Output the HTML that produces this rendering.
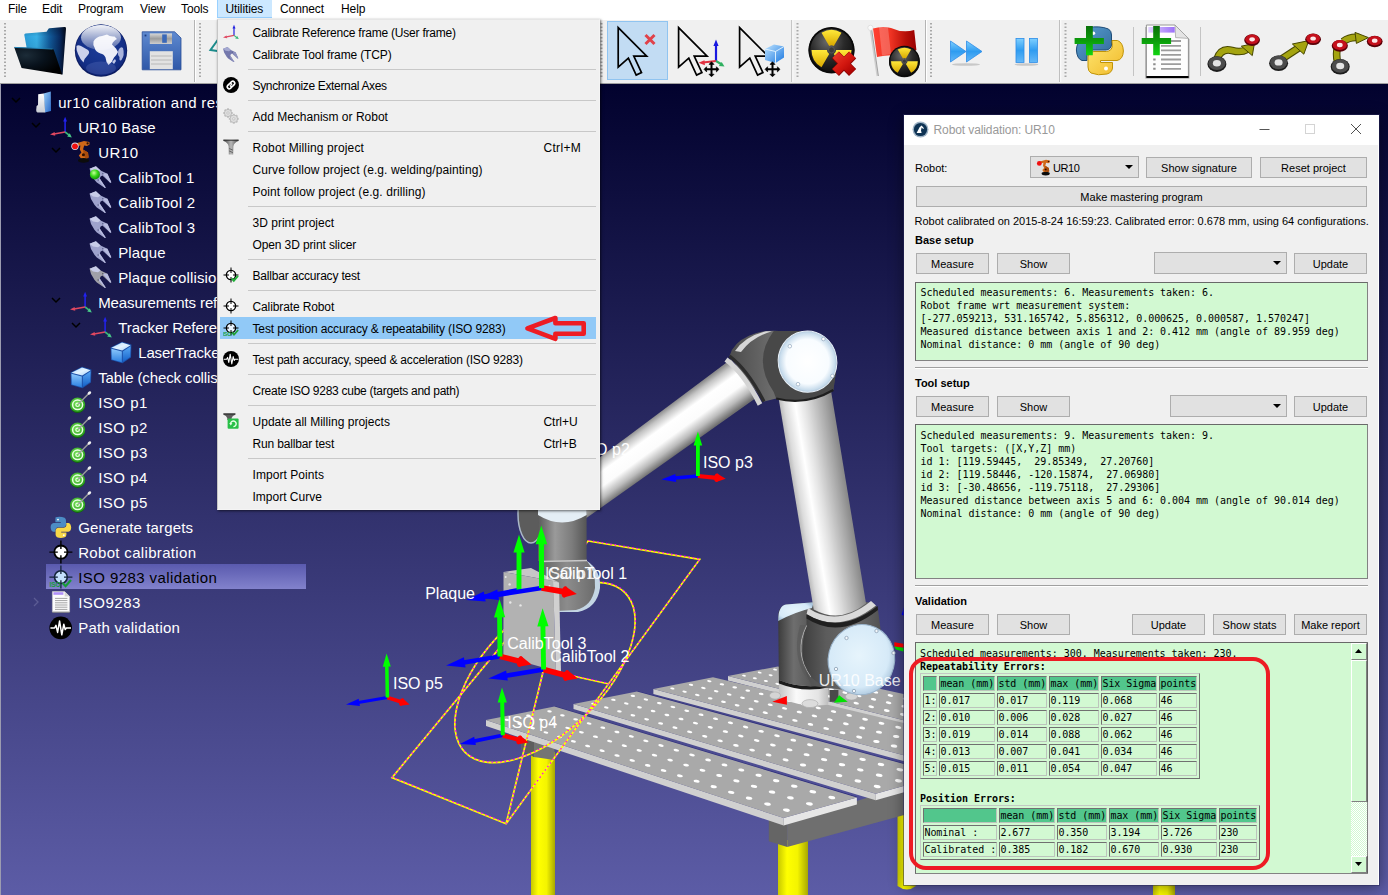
<!DOCTYPE html>
<html><head><meta charset="utf-8"><title>RoboDK</title>
<style>
*{box-sizing:border-box;margin:0;padding:0}
html,body{width:1388px;height:895px;overflow:hidden;background:#fff;font-family:"Liberation Sans",sans-serif}
#menubar{position:absolute;left:0;top:0;width:1388px;height:19px;background:#fff;font-size:12px;color:#000;letter-spacing:-.1px}
#menubar span{position:absolute;top:0;height:18px;line-height:19px;white-space:nowrap}
#menubar .hl{background:#cce8ff;border:1px solid #99d1ff;border-top:0;border-right:0;line-height:19px}
#toolbar{position:absolute;left:0;top:19px;width:1388px;height:65px;background:#f0f0f0;border-bottom:1px solid #a0a0a0}
#view{position:absolute;left:0;top:84px;width:1388px;height:811px;background:linear-gradient(#02022e,#5c5ca6);overflow:hidden}
#tree{position:absolute;left:0;top:0;width:320px;height:811px;color:#fff;font-size:15px}
#tree .r{position:absolute;height:25px;line-height:25px;white-space:nowrap;letter-spacing:.25px}
#tree .ic{position:absolute;width:24px;height:25px}
#tree .ar{position:absolute}
#tree .selrow{position:absolute;background:linear-gradient(#5a5aae,#8282cc)}
#menu{position:absolute;left:217px;top:19px;width:383px;height:491px;background:#f0f0f0;border:1px solid #f4f4f4;border-left-color:#c6c6c6;border-top-color:#e6e6e6;box-shadow:1px 1px 2.5px rgba(0,0,0,.6);font-size:12px;color:#000}
#menu .i{position:absolute;left:2px;width:376px;height:22px;line-height:25px;padding-left:32.5px;white-space:nowrap}
#menu .i b{position:absolute;left:323.5px;font-weight:normal}
#menu .i svg{position:absolute;left:3px;top:2.5px}
#menu .s{position:absolute;left:30px;width:348px;height:1px;background:#c8c8c8}
#menu .sel{background:#91c9f7}
#dlg{position:absolute;left:904px;top:115px;width:475px;height:770px;background:#f0f0f0;font-size:11px;color:#000;box-shadow:0 0 0 1px rgba(40,40,90,.5),0 2px 14px rgba(0,0,0,.45);border-right:1px solid #fff}
#tb{position:absolute;left:0;top:0;width:475px;height:30px;background:#fff}
#tt{position:absolute;left:29.5px;top:0;line-height:31px;font-size:12px;color:#999;letter-spacing:-.1px}
#dlg .l{position:absolute;height:16px;line-height:16px;white-space:nowrap}
#dlg .b{position:absolute;background:#e1e1e1;border:1px solid #adadad;text-align:center;white-space:nowrap}
#dlg .cb{position:absolute;background:#e1e1e1;border:1px solid #adadad;white-space:nowrap}
#dlg .cb i{position:absolute;right:5.5px;top:50%;margin-top:-2px;border:4px solid transparent;border-top:4.5px solid #000;border-bottom:0;width:0;height:0}
#dlg .cb .ri{position:absolute;left:4.5px;top:2px}
#dlg .g{position:absolute;background:#d2f9d2;border:1px solid #828282;border-top-color:#696969;border-left-color:#696969;font-family:"DejaVu Sans Mono","Liberation Mono",monospace;font-size:10px;line-height:13px;padding-left:4.5px;white-space:pre;letter-spacing:-.03px}
#dlg .m{position:absolute;font-family:"DejaVu Sans Mono","Liberation Mono",monospace;font-size:10px;line-height:13px;white-space:pre;letter-spacing:-.03px}
#dlg .hr{position:absolute;left:11px;width:453px;height:2px;border-top:1px solid #a0a0a0;border-bottom:1px solid #fff}
#dlg .t{position:absolute;border-collapse:separate;border-spacing:2px;border:1px solid;border-color:#c4c8c4 #707070 #707070 #c4c8c4;font-family:"DejaVu Sans Mono","Liberation Mono",monospace;font-size:10px;letter-spacing:-.03px}
#dlg .t td{border:1px solid;border-color:#707070 #bcc4bc #bcc4bc #707070;height:15px;line-height:12px;padding:0;white-space:pre;overflow:hidden}
#dlg .t td.h{background:#52c68c}
#sb{position:absolute;background:repeating-conic-gradient(#fff 0% 25%,#d2f9d2 0% 50%) 0 0/2px 2px}
#sb .sa{position:absolute;left:0;width:16px;height:17px;background:#d2f9d2;border:1px solid #fff;border-right-color:#808080;border-bottom-color:#808080;box-shadow:1px 0 0 #606060}
#sb .sa svg{position:absolute;left:0;top:-1px}
#rr{position:absolute;border:4.5px solid #ed1c24;border-radius:17px}

#lb{position:absolute;left:0;top:0;width:1.4px;height:811px;background:#9c9cb0}

</style></head><body>
<div id="menubar">
<span style="left:8px">File</span><span style="left:42px">Edit</span><span style="left:78px">Program</span><span style="left:140px">View</span><span style="left:181px">Tools</span><span class="hl" style="left:217px;width:55px;padding-left:7.5px">Utilities</span><span style="left:280px">Connect</span><span style="left:341px">Help</span>
</div>
<div id="toolbar">
<svg width="1388" height="65" viewBox="0 19 1388 65" style="position:absolute;left:0;top:0">
<defs>
<linearGradient id="tbFolB" x1="0" y1="0" x2="1" y2="0"><stop offset="0" stop-color="#2a9cd8"/><stop offset=".3" stop-color="#38b0e6"/><stop offset=".6" stop-color="#125c9c"/><stop offset=".85" stop-color="#082a60"/><stop offset="1" stop-color="#010818"/></linearGradient>
<linearGradient id="tbFolB2" x1="0" y1="0" x2="0" y2="1"><stop offset="0" stop-color="#000" stop-opacity=".25"/><stop offset=".2" stop-color="#000" stop-opacity="0"/><stop offset="1" stop-color="#000" stop-opacity=".2"/></linearGradient>
<radialGradient id="tbFolF" cx=".25" cy=".3" r=".8"><stop offset="0" stop-color="#1c2c38"/><stop offset=".5" stop-color="#08121c"/><stop offset="1" stop-color="#000"/></radialGradient>
<radialGradient id="tbGlobe" cx=".5" cy=".45" r=".6"><stop offset="0" stop-color="#1c3c98"/><stop offset=".7" stop-color="#143088"/><stop offset="1" stop-color="#102474"/></radialGradient>
<linearGradient id="tbGloss" x1="0" y1="0" x2="0" y2="1"><stop offset="0" stop-color="#fff" stop-opacity=".95"/><stop offset="1" stop-color="#fff" stop-opacity=".22"/></linearGradient>
<linearGradient id="tbFlop" x1="0" y1="0" x2="0" y2="1"><stop offset="0" stop-color="#5f8ad0"/><stop offset="1" stop-color="#2f58a8"/></linearGradient>
<linearGradient id="tbShut" x1="0" y1="0" x2="0" y2="1"><stop offset="0" stop-color="#d8d8d8"/><stop offset=".5" stop-color="#9c9c9c"/><stop offset="1" stop-color="#cfcfcf"/></linearGradient>
<radialGradient id="tbBlk" cx=".4" cy=".3" r=".8"><stop offset="0" stop-color="#6a6a6a"/><stop offset=".5" stop-color="#2a2a2a"/><stop offset="1" stop-color="#080808"/></radialGradient>
<linearGradient id="tbYel" x1="0" y1="0" x2="0" y2="1"><stop offset="0" stop-color="#ffe83a"/><stop offset="1" stop-color="#d8a800"/></linearGradient>
<linearGradient id="tbRed" x1="0" y1="0" x2="1" y2="0"><stop offset="0" stop-color="#ff4030"/><stop offset=".4" stop-color="#f03424"/><stop offset=".75" stop-color="#b81008"/><stop offset="1" stop-color="#980000"/></linearGradient>
<linearGradient id="tbRedX" gradientUnits="userSpaceOnUse" x1="835" y1="54" x2="853" y2="73"><stop offset="0" stop-color="#e83828"/><stop offset=".5" stop-color="#d41810"/><stop offset="1" stop-color="#a80000"/></linearGradient>
<linearGradient id="tbBlue" x1="0" y1="0" x2="0" y2="1"><stop offset="0" stop-color="#7fd0ff"/><stop offset=".5" stop-color="#2f9cf0"/><stop offset="1" stop-color="#64b8f8"/></linearGradient>
<linearGradient id="tbPyB" x1="0" y1="0" x2="1" y2="1"><stop offset="0" stop-color="#5a9fd4"/><stop offset="1" stop-color="#306998"/></linearGradient>
<linearGradient id="tbPyY" x1="0" y1="0" x2="1" y2="1"><stop offset="0" stop-color="#ffe873"/><stop offset="1" stop-color="#f0b828"/></linearGradient>
<linearGradient id="tbGrn" x1="0" y1="0" x2="0" y2="1"><stop offset="0" stop-color="#087008"/><stop offset=".5" stop-color="#0c9c0c"/><stop offset="1" stop-color="#10d410"/></linearGradient>
<linearGradient id="tbPur" x1="0" y1="0" x2="1" y2="0"><stop offset="0" stop-color="#e0d0ff"/><stop offset="1" stop-color="#9c70f8"/></linearGradient>
<linearGradient id="tbCube" x1="0" y1="0" x2="1" y2="1"><stop offset="0" stop-color="#bfe4ff"/><stop offset="1" stop-color="#1c78e0"/></linearGradient>
</defs>
<rect x="0" y="19" width="1388" height="1" fill="#fff"/>
<line x1="5" y1="23" x2="5" y2="78" stroke="#a8a8a8" stroke-width="2" stroke-dasharray="1.5 2"/>
<path d="M24.3,35 Q24.2,33.6 25.6,33.5 L46.6,31.8 L48.2,29.2 Q48.6,28.4 49.8,28.3 L64.6,27 Q66,27 66,28.4 L62.6,74.5 L30,66 Z" fill="url(#tbFolB)"/>
<path d="M24.3,35 Q24.2,33.6 25.6,33.5 L46.6,31.8 L48.2,29.2 Q48.6,28.4 49.8,28.3 L64.6,27 Q66,27 66,28.4 L62.6,74.5 L30,66 Z" fill="url(#tbFolB2)"/>
<path d="M14.2,47.2 L52,48.8 Q53.6,49 54,50.4 L62.2,74.6 L21.6,68.1 Z" fill="url(#tbFolF)"/>
<path d="M14.4,47.4 L52.6,49" stroke="#2484b8" stroke-width="1"/>
<circle cx="101" cy="50.6" r="26.2" fill="#0c1c60"/><circle cx="101" cy="50" r="25.4" fill="url(#tbGlobe)"/>
<path d="M93.5,41.5 Q96,36.5 102,36 L107,34.5 Q110,37 114.5,36.5 L117,39 Q113,41 112,44.5 L116,48.5 L118,52 Q116,56 114,57.5 Q112.5,62 108.5,65 Q106,62.5 105.5,57.5 Q104,54 100.5,53.5 Q95.5,52 94.5,47.5 Q92.8,44.5 93.5,41.5 Z" fill="#eceef8"/>
<path d="M76.5,46 Q78,44.5 81,46 L88,50 Q90.5,52.5 87.5,55.5 Q84.5,58 83.5,62.5 Q80,59 78,54 Q76,50 76.5,46Z" fill="#ccd2ec"/>
<path d="M118.5,50 Q120.5,46 123,48 Q125,55 121.5,60 Q119,62 119.5,57 Q117,55 118.5,50 Z" fill="#aab4dc"/>
<path d="M112,62 l3,-3 l1,2 l-2,3Z" fill="#c0c8e8"/>
<ellipse cx="101" cy="37.5" rx="20" ry="12.5" fill="url(#tbGloss)"/>
<ellipse cx="101" cy="68" rx="15" ry="6.5" fill="#8c9cdc" opacity=".2"/>
<path d="M142.2,31.8 L174.6,31.8 L181,38 L181,69.8 L142.2,69.8 Z" fill="url(#tbFlop)" stroke="#2a4e98" stroke-width=".8"/>
<rect x="149.8" y="33.4" width="22.2" height="10.6" fill="url(#tbShut)"/><rect x="162.2" y="34.4" width="4.6" height="8.4" fill="#3a68b8"/>
<rect x="149.8" y="51.2" width="23" height="18" fill="#e2e2e2"/><path d="M151,56 H171.6 M151,60 H171.6 M151,64 H171.6" stroke="#b8b8b8" stroke-width="1.2"/>
<rect x="144.6" y="34.6" width="1.8" height="1.8" fill="#1c3c80"/>
<line x1="194.5" y1="20" x2="194.5" y2="82" stroke="#b4b4b4" stroke-width="1"/><line x1="195.5" y1="20" x2="195.5" y2="82" stroke="#fff" stroke-width="1"/>
<line x1="200" y1="23" x2="200" y2="78" stroke="#a8a8a8" stroke-width="2" stroke-dasharray="1.5 2"/>
<path d="M222,34 L210.5,50 L224,52" fill="none" stroke="#1c8c8c" stroke-width="2"/>
<line x1="601.5" y1="23" x2="601.5" y2="78" stroke="#a8a8a8" stroke-width="2" stroke-dasharray="1.5 2"/>
<rect x="607.5" y="21.5" width="60" height="58" fill="#c2dcf3" stroke="#90c4f0" stroke-width="1"/>
<path d="M618.2,27.6 L618.2,67.1 L628.4,58.1 L636.2,75.1 L641.5,72.6 L633.8,56.2 L646.7,56.2Z" fill="none" stroke="#000" stroke-width="1.7" stroke-linejoin="miter"/>
<path d="M645.5,35 L654.5,44 M654.5,35 L645.5,44" stroke="#e0424a" stroke-width="3" stroke-linecap="butt"/>
<path d="M678.6,27.6 L678.6,67.1 L688.8,58.1 L696.6,75.1 L701.9,72.6 L694.2,56.2 L707.1,56.2Z" fill="none" stroke="#000" stroke-width="1.7" stroke-linejoin="miter"/>
<path d="M716,61 V44" stroke="#1818e0" stroke-width="2.2"/><path d="M716,39.5 l-2.6,6.5 h5.2Z" fill="#1818e0"/>
<path d="M716,61 L703,62.5" stroke="#e03040" stroke-width="2.2"/><path d="M698.5,62.8 l6,-2.6 l0.4,5Z" fill="#e03040"/>
<path d="M716,61 L721,64" stroke="#30b060" stroke-width="2.2"/><path d="M724.5,66.5 l-5.6,-0.4 l2.8,-4.2Z" fill="#30b060"/>
<path d="M705.0,69.3 L718.0,69.3 M711.5,62.8 L711.5,75.8" stroke="#000" stroke-width="2" fill="none"/><path d="M704.0,69.3 l2.6,-2.6 v5.2Z M719.0,69.3 l-2.6,-2.6 v5.2Z M711.5,61.8 l-2.6,2.6 h5.2Z M711.5,76.8 l-2.6,-2.6 h5.2Z" fill="#000" stroke="#000" stroke-width=".6"/>
<path d="M739.6,27.6 L739.6,67.1 L749.8,58.1 L757.6,75.1 L762.9,72.6 L755.2,56.2 L768.1,56.2Z" fill="none" stroke="#000" stroke-width="1.7" stroke-linejoin="miter"/>
<path d="M765,49 L774,44.5 L784,46.5 L784,57.5 L775.5,63 L765,60 Z" fill="url(#tbCube)"/><path d="M765,49 L775.5,51.5 L784,46.5 M775.5,51.5 V63" stroke="#e8f6ff" stroke-width=".9" fill="none"/>
<path d="M766.0,69.3 L779.0,69.3 M772.5,62.8 L772.5,75.8" stroke="#000" stroke-width="2" fill="none"/><path d="M765.0,69.3 l2.6,-2.6 v5.2Z M780.0,69.3 l-2.6,-2.6 v5.2Z M772.5,61.8 l-2.6,2.6 h5.2Z M772.5,76.8 l-2.6,-2.6 h5.2Z" fill="#000" stroke="#000" stroke-width=".6"/>
<line x1="791.8" y1="20" x2="791.8" y2="82" stroke="#b4b4b4" stroke-width="1"/><line x1="792.8" y1="20" x2="792.8" y2="82" stroke="#fff" stroke-width="1"/>
<line x1="797.5" y1="23" x2="797.5" y2="78" stroke="#a8a8a8" stroke-width="2" stroke-dasharray="1.5 2"/>
<circle cx="831.5" cy="50.6" r="23" fill="#111"/><circle cx="831.5" cy="50" r="23" fill="#0a0a0a"/><circle cx="831.5" cy="50" r="21.2" fill="url(#tbBlk)"/><path d="M821.5,32.7 A20.0,20.0 0 0 1 841.5,32.7 L833.8,46.0 A4.6,4.6 0 0 0 829.2,46.0Z" fill="url(#tbYel)"/><path d="M851.5,50.0 A20.0,20.0 0 0 1 841.5,67.3 L833.8,54.0 A4.6,4.6 0 0 0 836.1,50.0Z" fill="url(#tbYel)"/><path d="M821.5,67.3 A20.0,20.0 0 0 1 811.5,50.0 L826.9,50.0 A4.6,4.6 0 0 0 829.2,54.0Z" fill="url(#tbYel)"/><circle cx="831.5" cy="50" r="3.0" fill="#3a3a3a" stroke="#666" stroke-width=".6"/>
<path d="M835.4,55 L852.6,72.6 M852.6,55 L835.4,72.6" stroke="#8c0404" stroke-width="10" stroke-linecap="butt"/><path d="M835.6,54.8 L852.4,72 M852.4,54.8 L835.6,72" stroke="url(#tbRedX)" stroke-width="8.6" stroke-linecap="butt"/>
<path d="M870.4,29 L877.4,76" stroke="#d0d0d0" stroke-width="1.8"/><path d="M871.6,29 L878.4,76" stroke="#909090" stroke-width=".8"/><circle cx="870.4" cy="27.8" r="2.6" fill="#fafafa" stroke="#ccc" stroke-width=".5"/>
<path d="M873,28.6 Q882,25.6 891,28 Q903,33.5 914.2,30 L916.4,50 L904,57 Q892,53.5 877,57 Z" fill="url(#tbRed)"/>
<path d="M879,27.2 Q884,26.2 888,27.2 L891,54.2 Q886,54.4 882,55.6 Z" fill="#fff" opacity=".22"/>
<circle cx="904.4" cy="61.800000000000004" r="15.4" fill="#111"/><circle cx="904.4" cy="61.2" r="15.4" fill="#0a0a0a"/><circle cx="904.4" cy="61.2" r="14.2" fill="url(#tbBlk)"/><path d="M897.7,49.6 A13.4,13.4 0 0 1 911.1,49.6 L905.9,58.5 A3.1,3.1 0 0 0 902.9,58.5Z" fill="url(#tbYel)"/><path d="M917.8,61.2 A13.4,13.4 0 0 1 911.1,72.8 L905.9,63.9 A3.1,3.1 0 0 0 907.5,61.2Z" fill="url(#tbYel)"/><path d="M897.7,72.8 A13.4,13.4 0 0 1 891.0,61.2 L901.3,61.2 A3.1,3.1 0 0 0 902.9,63.9Z" fill="url(#tbYel)"/><circle cx="904.4" cy="61.2" r="2.0" fill="#3a3a3a" stroke="#666" stroke-width=".6"/>
<line x1="925.5" y1="20" x2="925.5" y2="82" stroke="#b4b4b4" stroke-width="1"/><line x1="926.5" y1="20" x2="926.5" y2="82" stroke="#fff" stroke-width="1"/>
<line x1="931" y1="23" x2="931" y2="78" stroke="#a8a8a8" stroke-width="2" stroke-dasharray="1.5 2"/>
<path d="M950.5,41 L966,51.5 L950.5,62 Z M966.5,41 L982,51.5 L966.5,62 Z" fill="url(#tbBlue)" stroke="#2c8ce8" stroke-width=".8"/>
<ellipse cx="966" cy="64.5" rx="14" ry="1.3" fill="#c8c8c8"/>
<rect x="1016" y="38.4" width="8" height="24" fill="url(#tbBlue)" stroke="#2c8ce8" stroke-width=".8"/><rect x="1029.4" y="38.4" width="8" height="24" fill="url(#tbBlue)" stroke="#2c8ce8" stroke-width=".8"/>
<ellipse cx="1026.5" cy="64.5" rx="12" ry="1.3" fill="#c8c8c8"/>
<line x1="1059.7" y1="20" x2="1059.7" y2="82" stroke="#b4b4b4" stroke-width="1"/><line x1="1060.7" y1="20" x2="1060.7" y2="82" stroke="#fff" stroke-width="1"/>
<line x1="1065.5" y1="23" x2="1065.5" y2="78" stroke="#a8a8a8" stroke-width="2" stroke-dasharray="1.5 2"/>
<path d="M1088,27.6 Q1099.5,25.5 1108.5,29 Q1111.5,31 1111.5,35 L1111.5,45 Q1111,49.5 1106,50 L1093,50 Q1087.5,50.5 1087,56 L1087,60.5 L1082,60.5 Q1077,59 1076.4,50 Q1076.6,41.5 1083,40.5 L1099.5,40.5 L1099.5,38.6 L1087,38.6 L1087,33.5 Q1087,29 1088,27.6 Z" fill="url(#tbPyB)" stroke="#1e4c78" stroke-width="1"/>
<path d="M1112,40.5 L1117.5,40.5 Q1123,42.5 1123.4,51 Q1123,59.5 1117,60.5 L1100.5,60.5 L1100.5,62.5 L1112.5,62.5 L1112.5,68 Q1112,72.5 1107,74 Q1098,76 1091,73 Q1088,71 1088,67 L1088,57 Q1088.5,52 1094,51.5 L1106.5,51.5 Q1112,51 1112.4,45.5 Z" fill="url(#tbPyY)" stroke="#c09408" stroke-width="1"/>
<circle cx="1106" cy="68.6" r="2" fill="#fff"/><circle cx="1093.4" cy="33.2" r="1.8" fill="#fff"/>
<path d="M1086,26 h6.8 v12 h11.1 v6 h-11.1 v11.3 h-6.8 v-11.3 h-11.4 v-6 h11.4 Z" fill="url(#tbGrn)"/>
<line x1="1133.5" y1="27" x2="1133.5" y2="76" stroke="#c4c4c4" stroke-width="1"/>
<path d="M1146.6,27 L1146.6,77.2 L1188.2,77.2 L1188.2,39" stroke="#555" stroke-width="2.4" fill="none" opacity=".55"/>
<path d="M1146.4,25 L1175,25 L1188.4,38.4 L1188.4,76.6 L1146.4,76.6 Z" fill="#fdfdfd" stroke="#8c8c8c" stroke-width=".9"/><path d="M1146.4,77 H1188.6" stroke="#000" stroke-width="1.8"/>
<path d="M1175,25 L1175.6,37.6 L1188.4,38.4 Z" fill="#e4e4e4" stroke="#9c9c9c" stroke-width=".7"/>
<rect x="1148.3" y="27" width="26.4" height="5.6" fill="url(#tbPur)"/>
<path d="M1161,41 H1181 M1161,45.8 H1181 M1161,50.3 H1181 M1161,54.9 H1181 M1161,59.5 H1181 M1161,64.2 H1181 M1161,68.8 H1181" stroke="#9c9c9c" stroke-width="1.8"/>
<path d="M1153.2,59.5 h2.4 M1153.2,64.2 h2.4 M1153.2,68.8 h2.4" stroke="#8c8c8c" stroke-width="1.9"/>
<path d="M1153.2,26 h6.6 v12 h11.3 v6 h-11.3 v11.3 h-6.6 v-11.3 h-11.5 v-6 h11.5 Z" fill="url(#tbGrn)"/>
<line x1="1200.5" y1="27" x2="1200.5" y2="76" stroke="#c4c4c4" stroke-width="1"/>
<path d="M1217,59 Q1221,47.5 1232,50.5 Q1241,53 1247,49.5" fill="none" stroke="#484800" stroke-width="7.6" stroke-linecap="butt"/><path d="M1217,59 Q1221,47.5 1232,50.5 Q1241,53 1247,49.5" fill="none" stroke="#a4a410" stroke-width="5.6"/>
<path d="M1254.4,43.5 L1241.3,46.2 L1252.3,55.6 Z" fill="#a4a410" stroke="#484800" stroke-width="1" stroke-linejoin="round"/>
<ellipse cx="1216.9" cy="64.1" rx="9.5" ry="7.8" fill="#1c1c1c"/><ellipse cx="1216.9" cy="63.3" rx="8.5" ry="6.8" fill="#4c4c4c"/><ellipse cx="1216.9" cy="63.3" rx="4.0" ry="3.2" fill="#e4e4e4"/>
<ellipse cx="1252.1" cy="40.099999999999994" rx="7.9" ry="5.8" fill="#5a0008"/><ellipse cx="1252.1" cy="39.3" rx="6.9" ry="4.8" fill="#c4101c"/><ellipse cx="1252.1" cy="39.3" rx="2.8" ry="2.1" fill="#fbe8e8"/>
<path d="M1281,59.5 L1300,47" fill="none" stroke="#484800" stroke-width="7.6" stroke-linecap="butt"/><path d="M1281,59.5 L1300,47" fill="none" stroke="#a4a410" stroke-width="5.6"/>
<path d="M1308.8,40.6 L1292.4,44 L1303.8,54.2 Z" fill="#a4a410" stroke="#484800" stroke-width="1" stroke-linejoin="round"/>
<ellipse cx="1278.6" cy="63.199999999999996" rx="9.5" ry="7.8" fill="#1c1c1c"/><ellipse cx="1278.6" cy="62.4" rx="8.5" ry="6.8" fill="#4c4c4c"/><ellipse cx="1278.6" cy="62.4" rx="4.0" ry="3.2" fill="#e4e4e4"/>
<ellipse cx="1313.1" cy="39.3" rx="7.9" ry="5.8" fill="#5a0008"/><ellipse cx="1313.1" cy="38.5" rx="6.9" ry="4.8" fill="#c4101c"/><ellipse cx="1313.1" cy="38.5" rx="2.8" ry="2.1" fill="#fbe8e8"/>
<path d="M1337.6,62 Q1335.6,54 1337.6,47" fill="none" stroke="#484800" stroke-width="7.6" stroke-linecap="butt"/><path d="M1337.6,62 Q1335.6,54 1337.6,47" fill="none" stroke="#a4a410" stroke-width="5.6"/>
<path d="M1343,41.5 Q1350,36.5 1359,37.6" fill="none" stroke="#484800" stroke-width="7.6" stroke-linecap="butt"/><path d="M1343,41.5 Q1350,36.5 1359,37.6" fill="none" stroke="#a4a410" stroke-width="5.6"/>
<path d="M1368.4,37.6 L1355,32.4 L1356.4,43.4 Z" fill="#a4a410" stroke="#484800" stroke-width="1" stroke-linejoin="round"/>
<ellipse cx="1340.2" cy="66.8" rx="9.5" ry="7.8" fill="#1c1c1c"/><ellipse cx="1340.2" cy="66" rx="8.5" ry="6.8" fill="#4c4c4c"/><ellipse cx="1340.2" cy="66" rx="4.0" ry="3.2" fill="#e4e4e4"/>
<ellipse cx="1339.8" cy="45.8" rx="8.1" ry="5.9" fill="#5a0008"/><ellipse cx="1339.8" cy="45" rx="7.1" ry="4.9" fill="#c4101c"/><ellipse cx="1339.8" cy="45" rx="2.9" ry="2.2" fill="#fbe8e8"/>
<ellipse cx="1374.7" cy="41.5" rx="7.9" ry="5.8" fill="#5a0008"/><ellipse cx="1374.7" cy="40.7" rx="6.9" ry="4.8" fill="#c4101c"/><ellipse cx="1374.7" cy="40.7" rx="2.8" ry="2.1" fill="#fbe8e8"/>
</svg>
</div>
<div id="view">
<svg id="scene" width="1388" height="811" viewBox="0 84 1388 811" style="position:absolute;left:0;top:0" font-family="'Liberation Sans',sans-serif">
<defs>
<linearGradient id="gUp" gradientUnits="userSpaceOnUse" x1="796" y1="505" x2="847.6" y2="496.4">
<stop offset="0" stop-color="#b9b9b9"/><stop offset=".1" stop-color="#dcdcdc"/><stop offset=".3" stop-color="#ffffff"/><stop offset=".5" stop-color="#e2e2e2"/><stop offset=".85" stop-color="#a6a6a6"/><stop offset="1" stop-color="#8a8a8a"/></linearGradient>
<linearGradient id="gFore" gradientUnits="userSpaceOnUse" x1="665" y1="408.5" x2="690.6" y2="443.8"><stop offset="0" stop-color="#8c8c8c"/><stop offset=".12" stop-color="#c4c4c4"/><stop offset=".32" stop-color="#ffffff"/><stop offset=".6" stop-color="#fcfcfc"/><stop offset=".82" stop-color="#bcbcbc"/><stop offset="1" stop-color="#707070"/></linearGradient>
<linearGradient id="gLeg" x1="0" x2="1" y1="0" y2="0"><stop offset="0" stop-color="#c8c800"/><stop offset=".3" stop-color="#ffff00"/><stop offset=".65" stop-color="#f4f400"/><stop offset="1" stop-color="#a8a800"/></linearGradient>
<linearGradient id="gDark" x1="0" x2="1" y1="0" y2="0"><stop offset="0" stop-color="#3c3c3c"/><stop offset=".3" stop-color="#6e6e6e"/><stop offset=".6" stop-color="#5a5a5a"/><stop offset="1" stop-color="#3a3a3a"/></linearGradient>
<linearGradient id="gWrist" x1="0" x2="1" y1="0" y2="0"><stop offset="0" stop-color="#5a5a5a"/><stop offset=".35" stop-color="#9a9a9a"/><stop offset=".7" stop-color="#7c7c7c"/><stop offset="1" stop-color="#555"/></linearGradient>
<linearGradient id="gWrist2" x1="0" x2="1" y1="0" y2="0"><stop offset="0" stop-color="#6a6a6a"/><stop offset=".45" stop-color="#8c8c8c"/><stop offset="1" stop-color="#6c6c6c"/></linearGradient>
<linearGradient id="gFl" x1="0" x2="1" y1="0" y2="0"><stop offset="0" stop-color="#c4c4c4"/><stop offset=".35" stop-color="#fafafa"/><stop offset=".8" stop-color="#e4e4e4"/><stop offset="1" stop-color="#bdbdbd"/></linearGradient>
<linearGradient id="gHouse" x1="0" x2="1" y1="0" y2="0"><stop offset="0" stop-color="#3e3e3e"/><stop offset=".3" stop-color="#5c5c5c"/><stop offset=".7" stop-color="#6a6a6a"/><stop offset="1" stop-color="#505050"/></linearGradient>
<linearGradient id="gElb" x1="0" x2="1" y1="0" y2="0"><stop offset="0" stop-color="#4c4c4c"/><stop offset=".4" stop-color="#6c6c6c"/><stop offset="1" stop-color="#484848"/></linearGradient>
<radialGradient id="gCapB" cx=".45" cy=".45" r=".6"><stop offset="0" stop-color="#e6f4fc"/><stop offset=".75" stop-color="#d6eaf8"/><stop offset="1" stop-color="#a8c4dc"/></radialGradient>
<radialGradient id="gCapW" cx=".5" cy=".5" r=".52"><stop offset="0" stop-color="#ffffff"/><stop offset=".7" stop-color="#f8fcff"/><stop offset=".9" stop-color="#c8dcec"/><stop offset="1" stop-color="#9cb8d0"/></radialGradient>
<radialGradient id="gCap" cx=".4" cy=".4" r=".7"><stop offset="0" stop-color="#f4fbff"/><stop offset=".7" stop-color="#e2eff8"/><stop offset="1" stop-color="#b9cfe0"/></radialGradient>
<linearGradient id="gPlaque" x1="0" x2="1" y1="0" y2="0"><stop offset="0" stop-color="#a8a8a8"/><stop offset="1" stop-color="#bcbcbc"/></linearGradient>
</defs>
<rect x="531" y="752" width="24" height="150" fill="url(#gLeg)"/>
<rect x="778" y="840" width="30" height="60" fill="url(#gLeg)"/>
<path d="M897.5,812 H916 V886 Q907,893 897.5,886 Z" fill="url(#gLeg)"/>
<rect x="1153" y="860" width="22" height="40" fill="url(#gLeg)"/>
<polygon points="521.5,738 554.5,744 554.5,760 534,757 521.5,750" fill="#747474"/>
<polygon points="521.5,738 534,742 534,757 521.5,750" fill="#5e5e5e"/>
<polygon points="768.8,815 787.2,822 787.2,846.9 768.8,841.2" fill="#656565"/>
<polygon points="787.2,822 906,786 906,814.4 787.2,846.9" fill="#6f6f6f"/>
<polygon points="728.0,676.0 1018.0,749.0 1018.0,754.5 728.0,680.5" fill="#d0d0d0"/>
<polygon points="1018.0,749.0 1078.0,732.0 1078.0,737.2 1018.0,754.5" fill="#e6e6e6"/>
<polygon points="728.0,676.0 777.9,666.4 1078.0,732.0 1018.0,749.0" fill="#a9a9a9"/>
<g fill="#fff"><ellipse cx="744.0" cy="675.7" rx="1.97" ry="0.91" transform="rotate(10 744.0 675.7)"/><ellipse cx="759.7" cy="672.6" rx="1.99" ry="0.93" transform="rotate(10 759.7 672.6)"/><ellipse cx="775.1" cy="669.6" rx="2.02" ry="0.94" transform="rotate(10 775.1 669.6)"/><ellipse cx="754.8" cy="678.3" rx="2.03" ry="0.94" transform="rotate(10 754.8 678.3)"/><ellipse cx="770.6" cy="675.2" rx="2.06" ry="0.96" transform="rotate(10 770.6 675.2)"/><ellipse cx="786.2" cy="672.1" rx="2.08" ry="0.97" transform="rotate(10 786.2 672.1)"/><ellipse cx="765.9" cy="681.0" rx="2.11" ry="0.98" transform="rotate(10 765.9 681.0)"/><ellipse cx="782.0" cy="677.8" rx="2.13" ry="0.99" transform="rotate(10 782.0 677.8)"/><ellipse cx="797.7" cy="674.7" rx="2.16" ry="1.00" transform="rotate(10 797.7 674.7)"/><ellipse cx="777.5" cy="683.9" rx="2.18" ry="1.01" transform="rotate(10 777.5 683.9)"/><ellipse cx="793.7" cy="680.6" rx="2.21" ry="1.02" transform="rotate(10 793.7 680.6)"/><ellipse cx="809.6" cy="677.4" rx="2.23" ry="1.04" transform="rotate(10 809.6 677.4)"/><ellipse cx="789.4" cy="686.8" rx="2.26" ry="1.05" transform="rotate(10 789.4 686.8)"/><ellipse cx="805.8" cy="683.4" rx="2.29" ry="1.06" transform="rotate(10 805.8 683.4)"/><ellipse cx="821.8" cy="680.1" rx="2.31" ry="1.07" transform="rotate(10 821.8 680.1)"/><ellipse cx="801.8" cy="689.8" rx="2.34" ry="1.09" transform="rotate(10 801.8 689.8)"/><ellipse cx="818.3" cy="686.4" rx="2.37" ry="1.10" transform="rotate(10 818.3 686.4)"/><ellipse cx="834.5" cy="683.0" rx="2.39" ry="1.11" transform="rotate(10 834.5 683.0)"/><ellipse cx="814.7" cy="693.0" rx="2.43" ry="1.13" transform="rotate(10 814.7 693.0)"/><ellipse cx="831.4" cy="689.4" rx="2.46" ry="1.14" transform="rotate(10 831.4 689.4)"/><ellipse cx="847.7" cy="685.9" rx="2.48" ry="1.15" transform="rotate(10 847.7 685.9)"/><ellipse cx="828.0" cy="696.2" rx="2.52" ry="1.17" transform="rotate(10 828.0 696.2)"/><ellipse cx="844.9" cy="692.6" rx="2.55" ry="1.18" transform="rotate(10 844.9 692.6)"/><ellipse cx="861.4" cy="689.0" rx="2.57" ry="1.19" transform="rotate(10 861.4 689.0)"/><ellipse cx="841.8" cy="699.6" rx="2.62" ry="1.22" transform="rotate(10 841.8 699.6)"/><ellipse cx="858.9" cy="695.9" rx="2.65" ry="1.23" transform="rotate(10 858.9 695.9)"/><ellipse cx="875.6" cy="692.2" rx="2.67" ry="1.24" transform="rotate(10 875.6 692.2)"/><ellipse cx="856.2" cy="703.2" rx="2.73" ry="1.27" transform="rotate(10 856.2 703.2)"/><ellipse cx="873.5" cy="699.3" rx="2.75" ry="1.28" transform="rotate(10 873.5 699.3)"/><ellipse cx="890.3" cy="695.5" rx="2.78" ry="1.29" transform="rotate(10 890.3 695.5)"/><ellipse cx="871.2" cy="706.8" rx="2.84" ry="1.32" transform="rotate(10 871.2 706.8)"/><ellipse cx="888.6" cy="702.8" rx="2.86" ry="1.33" transform="rotate(10 888.6 702.8)"/><ellipse cx="905.6" cy="698.9" rx="2.89" ry="1.34" transform="rotate(10 905.6 698.9)"/><ellipse cx="886.8" cy="710.6" rx="2.95" ry="1.37" transform="rotate(10 886.8 710.6)"/><ellipse cx="904.3" cy="706.5" rx="2.98" ry="1.38" transform="rotate(10 904.3 706.5)"/><ellipse cx="903.0" cy="714.6" rx="3.08" ry="1.43" transform="rotate(10 903.0 714.6)"/></g>
<polygon points="653.4,688.9 949.4,767.3 949.4,773.3 653.4,693.9" fill="#d0d0d0"/>
<polygon points="949.4,767.3 1013.4,749.3 1013.4,755.0 949.4,773.3" fill="#e6e6e6"/>
<polygon points="653.4,688.9 713.0,677.3 1013.4,749.3 949.4,767.3" fill="#a9a9a9"/>
<g fill="#fff"><ellipse cx="672.3" cy="688.5" rx="2.22" ry="1.03" transform="rotate(10 672.3 688.5)"/><ellipse cx="691.0" cy="684.8" rx="2.23" ry="1.04" transform="rotate(10 691.0 684.8)"/><ellipse cx="709.3" cy="681.2" rx="2.24" ry="1.04" transform="rotate(10 709.3 681.2)"/><ellipse cx="684.6" cy="691.7" rx="2.27" ry="1.05" transform="rotate(10 684.6 691.7)"/><ellipse cx="703.4" cy="688.0" rx="2.28" ry="1.06" transform="rotate(10 703.4 688.0)"/><ellipse cx="721.9" cy="684.3" rx="2.29" ry="1.07" transform="rotate(10 721.9 684.3)"/><ellipse cx="697.3" cy="695.0" rx="2.32" ry="1.08" transform="rotate(10 697.3 695.0)"/><ellipse cx="716.2" cy="691.2" rx="2.34" ry="1.08" transform="rotate(10 716.2 691.2)"/><ellipse cx="734.7" cy="687.4" rx="2.35" ry="1.09" transform="rotate(10 734.7 687.4)"/><ellipse cx="710.2" cy="698.4" rx="2.38" ry="1.11" transform="rotate(10 710.2 698.4)"/><ellipse cx="729.2" cy="694.5" rx="2.39" ry="1.11" transform="rotate(10 729.2 694.5)"/><ellipse cx="747.8" cy="690.6" rx="2.40" ry="1.12" transform="rotate(10 747.8 690.6)"/><ellipse cx="723.5" cy="701.8" rx="2.44" ry="1.13" transform="rotate(10 723.5 701.8)"/><ellipse cx="742.5" cy="697.8" rx="2.45" ry="1.14" transform="rotate(10 742.5 697.8)"/><ellipse cx="761.2" cy="693.9" rx="2.46" ry="1.14" transform="rotate(10 761.2 693.9)"/><ellipse cx="737.1" cy="705.3" rx="2.50" ry="1.16" transform="rotate(10 737.1 705.3)"/><ellipse cx="756.2" cy="701.3" rx="2.51" ry="1.17" transform="rotate(10 756.2 701.3)"/><ellipse cx="775.0" cy="697.3" rx="2.52" ry="1.17" transform="rotate(10 775.0 697.3)"/><ellipse cx="751.0" cy="709.0" rx="2.56" ry="1.19" transform="rotate(10 751.0 709.0)"/><ellipse cx="770.2" cy="704.8" rx="2.57" ry="1.20" transform="rotate(10 770.2 704.8)"/><ellipse cx="789.1" cy="700.7" rx="2.58" ry="1.20" transform="rotate(10 789.1 700.7)"/><ellipse cx="765.3" cy="712.7" rx="2.63" ry="1.22" transform="rotate(10 765.3 712.7)"/><ellipse cx="784.6" cy="708.4" rx="2.64" ry="1.23" transform="rotate(10 784.6 708.4)"/><ellipse cx="803.5" cy="704.2" rx="2.65" ry="1.23" transform="rotate(10 803.5 704.2)"/><ellipse cx="779.9" cy="716.5" rx="2.70" ry="1.25" transform="rotate(10 779.9 716.5)"/><ellipse cx="799.3" cy="712.1" rx="2.71" ry="1.26" transform="rotate(10 799.3 712.1)"/><ellipse cx="818.3" cy="707.9" rx="2.72" ry="1.26" transform="rotate(10 818.3 707.9)"/><ellipse cx="794.9" cy="720.4" rx="2.77" ry="1.29" transform="rotate(10 794.9 720.4)"/><ellipse cx="814.4" cy="715.9" rx="2.78" ry="1.29" transform="rotate(10 814.4 715.9)"/><ellipse cx="833.5" cy="711.6" rx="2.79" ry="1.29" transform="rotate(10 833.5 711.6)"/><ellipse cx="810.4" cy="724.4" rx="2.84" ry="1.32" transform="rotate(10 810.4 724.4)"/><ellipse cx="829.9" cy="719.8" rx="2.85" ry="1.32" transform="rotate(10 829.9 719.8)"/><ellipse cx="849.1" cy="715.4" rx="2.86" ry="1.33" transform="rotate(10 849.1 715.4)"/><ellipse cx="826.2" cy="728.5" rx="2.92" ry="1.36" transform="rotate(10 826.2 728.5)"/><ellipse cx="845.9" cy="723.8" rx="2.93" ry="1.36" transform="rotate(10 845.9 723.8)"/><ellipse cx="865.1" cy="719.3" rx="2.93" ry="1.36" transform="rotate(10 865.1 719.3)"/><ellipse cx="842.5" cy="732.7" rx="3.00" ry="1.39" transform="rotate(10 842.5 732.7)"/><ellipse cx="862.2" cy="727.9" rx="3.01" ry="1.40" transform="rotate(10 862.2 727.9)"/><ellipse cx="881.5" cy="723.3" rx="3.01" ry="1.40" transform="rotate(10 881.5 723.3)"/><ellipse cx="859.2" cy="737.1" rx="3.08" ry="1.43" transform="rotate(10 859.2 737.1)"/><ellipse cx="879.0" cy="732.2" rx="3.09" ry="1.43" transform="rotate(10 879.0 732.2)"/><ellipse cx="898.3" cy="727.4" rx="3.09" ry="1.44" transform="rotate(10 898.3 727.4)"/><ellipse cx="876.4" cy="741.5" rx="3.17" ry="1.47" transform="rotate(10 876.4 741.5)"/><ellipse cx="896.2" cy="736.5" rx="3.17" ry="1.47" transform="rotate(10 896.2 736.5)"/><ellipse cx="894.0" cy="746.1" rx="3.26" ry="1.51" transform="rotate(10 894.0 746.1)"/></g>
<path d="M637,691.5 L943.7,774.8" stroke="#2c2c7c" stroke-width="1.2"/>
<polygon points="573.5,704.0 875.7,793.8 875.7,800.3 573.5,709.0" fill="#d0d0d0"/>
<polygon points="875.7,793.8 943.7,774.8 943.7,781.0 875.7,800.3" fill="#e6e6e6"/>
<polygon points="573.5,704.0 637.0,691.5 943.7,774.8 875.7,793.8" fill="#a9a9a9"/>
<g fill="#fff"><ellipse cx="593.4" cy="703.8" rx="2.26" ry="1.05" transform="rotate(10 593.4 703.8)"/><ellipse cx="613.4" cy="699.8" rx="2.27" ry="1.06" transform="rotate(10 613.4 699.8)"/><ellipse cx="632.9" cy="695.9" rx="2.29" ry="1.06" transform="rotate(10 632.9 695.9)"/><ellipse cx="606.3" cy="707.5" rx="2.31" ry="1.07" transform="rotate(10 606.3 707.5)"/><ellipse cx="626.3" cy="703.5" rx="2.32" ry="1.08" transform="rotate(10 626.3 703.5)"/><ellipse cx="645.9" cy="699.5" rx="2.33" ry="1.08" transform="rotate(10 645.9 699.5)"/><ellipse cx="619.4" cy="711.4" rx="2.36" ry="1.10" transform="rotate(10 619.4 711.4)"/><ellipse cx="639.5" cy="707.3" rx="2.38" ry="1.10" transform="rotate(10 639.5 707.3)"/><ellipse cx="659.3" cy="703.2" rx="2.38" ry="1.11" transform="rotate(10 659.3 703.2)"/><ellipse cx="632.9" cy="715.3" rx="2.42" ry="1.12" transform="rotate(10 632.9 715.3)"/><ellipse cx="653.1" cy="711.1" rx="2.43" ry="1.13" transform="rotate(10 653.1 711.1)"/><ellipse cx="672.9" cy="707.0" rx="2.44" ry="1.13" transform="rotate(10 672.9 707.0)"/><ellipse cx="646.6" cy="719.3" rx="2.47" ry="1.15" transform="rotate(10 646.6 719.3)"/><ellipse cx="666.9" cy="715.0" rx="2.48" ry="1.15" transform="rotate(10 666.9 715.0)"/><ellipse cx="686.8" cy="710.8" rx="2.49" ry="1.16" transform="rotate(10 686.8 710.8)"/><ellipse cx="660.6" cy="723.4" rx="2.53" ry="1.17" transform="rotate(10 660.6 723.4)"/><ellipse cx="681.0" cy="719.0" rx="2.54" ry="1.18" transform="rotate(10 681.0 719.0)"/><ellipse cx="701.0" cy="714.7" rx="2.55" ry="1.18" transform="rotate(10 701.0 714.7)"/><ellipse cx="675.0" cy="727.6" rx="2.59" ry="1.20" transform="rotate(10 675.0 727.6)"/><ellipse cx="695.5" cy="723.1" rx="2.60" ry="1.21" transform="rotate(10 695.5 723.1)"/><ellipse cx="715.5" cy="718.7" rx="2.60" ry="1.21" transform="rotate(10 715.5 718.7)"/><ellipse cx="689.7" cy="731.9" rx="2.65" ry="1.23" transform="rotate(10 689.7 731.9)"/><ellipse cx="710.2" cy="727.3" rx="2.66" ry="1.23" transform="rotate(10 710.2 727.3)"/><ellipse cx="730.4" cy="722.8" rx="2.66" ry="1.24" transform="rotate(10 730.4 722.8)"/><ellipse cx="704.7" cy="736.3" rx="2.71" ry="1.26" transform="rotate(10 704.7 736.3)"/><ellipse cx="725.4" cy="731.6" rx="2.72" ry="1.26" transform="rotate(10 725.4 731.6)"/><ellipse cx="745.6" cy="727.0" rx="2.73" ry="1.27" transform="rotate(10 745.6 727.0)"/><ellipse cx="720.1" cy="740.8" rx="2.77" ry="1.29" transform="rotate(10 720.1 740.8)"/><ellipse cx="740.8" cy="736.0" rx="2.78" ry="1.29" transform="rotate(10 740.8 736.0)"/><ellipse cx="761.1" cy="731.3" rx="2.79" ry="1.30" transform="rotate(10 761.1 731.3)"/><ellipse cx="735.9" cy="745.4" rx="2.84" ry="1.32" transform="rotate(10 735.9 745.4)"/><ellipse cx="756.7" cy="740.5" rx="2.85" ry="1.32" transform="rotate(10 756.7 740.5)"/><ellipse cx="777.0" cy="735.7" rx="2.86" ry="1.33" transform="rotate(10 777.0 735.7)"/><ellipse cx="752.1" cy="750.1" rx="2.91" ry="1.35" transform="rotate(10 752.1 750.1)"/><ellipse cx="772.9" cy="745.1" rx="2.92" ry="1.36" transform="rotate(10 772.9 745.1)"/><ellipse cx="793.3" cy="740.2" rx="2.92" ry="1.36" transform="rotate(10 793.3 740.2)"/><ellipse cx="768.6" cy="754.9" rx="2.98" ry="1.39" transform="rotate(10 768.6 754.9)"/><ellipse cx="789.6" cy="749.8" rx="2.99" ry="1.39" transform="rotate(10 789.6 749.8)"/><ellipse cx="810.0" cy="744.8" rx="3.00" ry="1.39" transform="rotate(10 810.0 744.8)"/><ellipse cx="785.6" cy="759.9" rx="3.06" ry="1.42" transform="rotate(10 785.6 759.9)"/><ellipse cx="806.6" cy="754.7" rx="3.06" ry="1.42" transform="rotate(10 806.6 754.7)"/><ellipse cx="827.1" cy="749.6" rx="3.07" ry="1.43" transform="rotate(10 827.1 749.6)"/><ellipse cx="803.0" cy="765.0" rx="3.14" ry="1.46" transform="rotate(10 803.0 765.0)"/><ellipse cx="824.1" cy="759.6" rx="3.14" ry="1.46" transform="rotate(10 824.1 759.6)"/><ellipse cx="844.6" cy="754.4" rx="3.15" ry="1.46" transform="rotate(10 844.6 754.4)"/><ellipse cx="820.8" cy="770.2" rx="3.22" ry="1.49" transform="rotate(10 820.8 770.2)"/><ellipse cx="842.0" cy="764.7" rx="3.22" ry="1.50" transform="rotate(10 842.0 764.7)"/><ellipse cx="862.6" cy="759.4" rx="3.23" ry="1.50" transform="rotate(10 862.6 759.4)"/><ellipse cx="839.1" cy="775.5" rx="3.30" ry="1.53" transform="rotate(10 839.1 775.5)"/><ellipse cx="860.3" cy="769.9" rx="3.31" ry="1.53" transform="rotate(10 860.3 769.9)"/><ellipse cx="881.0" cy="764.5" rx="3.31" ry="1.54" transform="rotate(10 881.0 764.5)"/><ellipse cx="857.9" cy="781.0" rx="3.39" ry="1.57" transform="rotate(10 857.9 781.0)"/><ellipse cx="879.2" cy="775.3" rx="3.39" ry="1.57" transform="rotate(10 879.2 775.3)"/><ellipse cx="899.9" cy="769.7" rx="3.39" ry="1.58" transform="rotate(10 899.9 769.7)"/><ellipse cx="877.2" cy="786.6" rx="3.48" ry="1.62" transform="rotate(10 877.2 786.6)"/><ellipse cx="898.5" cy="780.8" rx="3.48" ry="1.62" transform="rotate(10 898.5 780.8)"/></g>
<path d="M554.5,706.6 L856.9,797.4" stroke="#2c2c7c" stroke-width="1.2"/>
<polygon points="486.0,720.1 783.6,818.0 783.6,825.5 486.0,726.1" fill="#d0d0d0"/>
<polygon points="783.6,818.0 856.9,797.4 856.9,804.5 783.6,825.5" fill="#e6e6e6"/>
<polygon points="486.0,720.1 554.5,706.6 856.9,797.4 783.6,818.0" fill="#a9a9a9"/>
<g fill="#fff"><ellipse cx="506.9" cy="719.9" rx="2.28" ry="1.06" transform="rotate(10 506.9 719.9)"/><ellipse cx="528.4" cy="715.6" rx="2.29" ry="1.06" transform="rotate(10 528.4 715.6)"/><ellipse cx="549.5" cy="711.4" rx="2.30" ry="1.07" transform="rotate(10 549.5 711.4)"/><ellipse cx="519.6" cy="724.0" rx="2.33" ry="1.08" transform="rotate(10 519.6 724.0)"/><ellipse cx="541.2" cy="719.7" rx="2.34" ry="1.09" transform="rotate(10 541.2 719.7)"/><ellipse cx="562.4" cy="715.4" rx="2.35" ry="1.09" transform="rotate(10 562.4 715.4)"/><ellipse cx="532.6" cy="728.2" rx="2.38" ry="1.10" transform="rotate(10 532.6 728.2)"/><ellipse cx="554.3" cy="723.8" rx="2.39" ry="1.11" transform="rotate(10 554.3 723.8)"/><ellipse cx="575.6" cy="719.4" rx="2.40" ry="1.11" transform="rotate(10 575.6 719.4)"/><ellipse cx="545.9" cy="732.5" rx="2.43" ry="1.13" transform="rotate(10 545.9 732.5)"/><ellipse cx="567.7" cy="728.0" rx="2.44" ry="1.13" transform="rotate(10 567.7 728.0)"/><ellipse cx="589.1" cy="723.5" rx="2.45" ry="1.14" transform="rotate(10 589.1 723.5)"/><ellipse cx="559.5" cy="736.9" rx="2.48" ry="1.15" transform="rotate(10 559.5 736.9)"/><ellipse cx="581.4" cy="732.3" rx="2.49" ry="1.16" transform="rotate(10 581.4 732.3)"/><ellipse cx="602.8" cy="727.7" rx="2.50" ry="1.16" transform="rotate(10 602.8 727.7)"/><ellipse cx="573.4" cy="741.4" rx="2.54" ry="1.18" transform="rotate(10 573.4 741.4)"/><ellipse cx="595.4" cy="736.7" rx="2.55" ry="1.18" transform="rotate(10 595.4 736.7)"/><ellipse cx="616.9" cy="732.0" rx="2.56" ry="1.19" transform="rotate(10 616.9 732.0)"/><ellipse cx="587.6" cy="746.0" rx="2.59" ry="1.20" transform="rotate(10 587.6 746.0)"/><ellipse cx="609.7" cy="741.1" rx="2.60" ry="1.21" transform="rotate(10 609.7 741.1)"/><ellipse cx="631.3" cy="736.4" rx="2.61" ry="1.21" transform="rotate(10 631.3 736.4)"/><ellipse cx="602.1" cy="750.7" rx="2.65" ry="1.23" transform="rotate(10 602.1 750.7)"/><ellipse cx="624.3" cy="745.7" rx="2.66" ry="1.24" transform="rotate(10 624.3 745.7)"/><ellipse cx="645.9" cy="740.9" rx="2.67" ry="1.24" transform="rotate(10 645.9 740.9)"/><ellipse cx="617.0" cy="755.5" rx="2.71" ry="1.26" transform="rotate(10 617.0 755.5)"/><ellipse cx="639.2" cy="750.4" rx="2.72" ry="1.26" transform="rotate(10 639.2 750.4)"/><ellipse cx="661.0" cy="745.5" rx="2.73" ry="1.27" transform="rotate(10 661.0 745.5)"/><ellipse cx="632.2" cy="760.4" rx="2.78" ry="1.29" transform="rotate(10 632.2 760.4)"/><ellipse cx="654.5" cy="755.2" rx="2.78" ry="1.29" transform="rotate(10 654.5 755.2)"/><ellipse cx="676.3" cy="750.2" rx="2.79" ry="1.30" transform="rotate(10 676.3 750.2)"/><ellipse cx="647.7" cy="765.4" rx="2.84" ry="1.32" transform="rotate(10 647.7 765.4)"/><ellipse cx="670.1" cy="760.1" rx="2.85" ry="1.32" transform="rotate(10 670.1 760.1)"/><ellipse cx="692.0" cy="755.0" rx="2.86" ry="1.33" transform="rotate(10 692.0 755.0)"/><ellipse cx="663.6" cy="770.5" rx="2.91" ry="1.35" transform="rotate(10 663.6 770.5)"/><ellipse cx="686.1" cy="765.1" rx="2.92" ry="1.35" transform="rotate(10 686.1 765.1)"/><ellipse cx="708.1" cy="759.9" rx="2.92" ry="1.36" transform="rotate(10 708.1 759.9)"/><ellipse cx="679.9" cy="775.8" rx="2.98" ry="1.38" transform="rotate(10 679.9 775.8)"/><ellipse cx="702.5" cy="770.3" rx="2.99" ry="1.39" transform="rotate(10 702.5 770.3)"/><ellipse cx="724.5" cy="764.9" rx="2.99" ry="1.39" transform="rotate(10 724.5 764.9)"/><ellipse cx="696.6" cy="781.2" rx="3.05" ry="1.42" transform="rotate(10 696.6 781.2)"/><ellipse cx="719.2" cy="775.5" rx="3.06" ry="1.42" transform="rotate(10 719.2 775.5)"/><ellipse cx="741.3" cy="770.0" rx="3.06" ry="1.42" transform="rotate(10 741.3 770.0)"/><ellipse cx="713.7" cy="786.7" rx="3.13" ry="1.45" transform="rotate(10 713.7 786.7)"/><ellipse cx="736.4" cy="780.9" rx="3.13" ry="1.45" transform="rotate(10 736.4 780.9)"/><ellipse cx="758.6" cy="775.3" rx="3.14" ry="1.46" transform="rotate(10 758.6 775.3)"/><ellipse cx="731.2" cy="792.4" rx="3.20" ry="1.49" transform="rotate(10 731.2 792.4)"/><ellipse cx="754.0" cy="786.4" rx="3.21" ry="1.49" transform="rotate(10 754.0 786.4)"/><ellipse cx="776.2" cy="780.7" rx="3.21" ry="1.49" transform="rotate(10 776.2 780.7)"/><ellipse cx="749.1" cy="798.2" rx="3.29" ry="1.53" transform="rotate(10 749.1 798.2)"/><ellipse cx="772.0" cy="792.1" rx="3.29" ry="1.53" transform="rotate(10 772.0 792.1)"/><ellipse cx="794.3" cy="786.2" rx="3.29" ry="1.53" transform="rotate(10 794.3 786.2)"/><ellipse cx="767.5" cy="804.1" rx="3.37" ry="1.56" transform="rotate(10 767.5 804.1)"/><ellipse cx="790.4" cy="797.9" rx="3.37" ry="1.57" transform="rotate(10 790.4 797.9)"/><ellipse cx="812.8" cy="791.8" rx="3.37" ry="1.57" transform="rotate(10 812.8 791.8)"/><ellipse cx="786.4" cy="810.2" rx="3.46" ry="1.61" transform="rotate(10 786.4 810.2)"/><ellipse cx="809.4" cy="803.9" rx="3.46" ry="1.61" transform="rotate(10 809.4 803.9)"/><ellipse cx="831.8" cy="797.6" rx="3.46" ry="1.61" transform="rotate(10 831.8 797.6)"/></g>
<path d="M778.9,682 L828.2,684 L828.2,704.7 Q803,708 779,698 Z" fill="url(#gFl)"/>
<ellipse cx="775" cy="695.5" rx="5.5" ry="3.6" fill="#d4d4d4" stroke="#aaa" stroke-width=".6"/><ellipse cx="810" cy="703.6" rx="8" ry="4" fill="#dcdcdc" stroke="#aaa" stroke-width=".6"/><ellipse cx="851.5" cy="696.5" rx="6" ry="3.6" fill="#d4d4d4" stroke="#aaa" stroke-width=".6"/>
<rect x="829.7" y="690" width="8.7" height="11.8" fill="#4a4a4a"/>
<path d="M778.2,616 Q778.5,606 786,604.5 L813.7,602.3 L830,612 L830,684 Q804,690 778.9,680 Z" fill="url(#gDark)"/>
<path d="M778.9,680 Q804,690 830,684 L830,687 Q804,693.5 778.9,683.5 Z" fill="#1c1c1c"/>
<path d="M778.2,621 Q778,606 786,604.5 L813.7,602.3 L812,608 Q795,612 778.2,621 Z" fill="url(#gCapB)"/>
<path d="M806.5,614 L866,602 Q877,603 878,610 L882,640 L870,688 L845,690 L812,686 Q796,660 806.5,625 Z" fill="url(#gHouse)"/>
<path d="M806.5,625.6 Q793,652 810.8,677.1" stroke="#d8d8d8" stroke-width=".9" fill="none"/>
<path d="M806.5,625.6 Q793,652 810.8,677.1 L822,686 L812,686 Q790,660 800,625 Z" fill="#5a5a5a" opacity=".7"/>
<path d="M778.9,400 L831.2,392 L866,603.6 Q840,624 813.7,609.4 Z" fill="url(#gUp)"/>
<path d="M808,608 Q838,628 871,601 L876,605.5 Q840,634 806.5,614.5 Z" fill="#dadada"/>
<path d="M806.5,614 Q840,635 877.6,606 L878,610 Q840,640 806.5,618.5 Z" fill="#202020"/>
<ellipse cx="861.4" cy="659.7" rx="33.2" ry="35.2" fill="url(#gCapB)" stroke="#9ab4cc" stroke-width="1" transform="rotate(14 861.4 659.7)"/>
<circle cx="846.5" cy="638" r="1.7" fill="#f4f8fc" stroke="#8ca0b4" stroke-width=".8"/>
<circle cx="876.5" cy="631" r="1.7" fill="#f4f8fc" stroke="#8ca0b4" stroke-width=".8"/>
<circle cx="893.5" cy="653" r="1.7" fill="#f4f8fc" stroke="#8ca0b4" stroke-width=".8"/>
<circle cx="836" cy="669" r="1.7" fill="#f4f8fc" stroke="#8ca0b4" stroke-width=".8"/>
<circle cx="854" cy="691" r="1.7" fill="#f4f8fc" stroke="#8ca0b4" stroke-width=".8"/>
<polygon points="772.3,701.8 786.9,696 786.9,704.7" fill="#ff0000"/>
<polygon points="839.1,695.3 847.8,701.8 834,702.8" fill="#00e000"/>
<polygon points="894.3,642.3 905,644 905,648 894.3,646.4" fill="#ff0000"/><polygon points="894.3,646.4 905,648 905,652 896,649.5" fill="#00e000"/>
<polygon points="901.6,614.7 905,604 905,616" fill="#0000ff"/>
<text x="818.8" y="685.8" font-size="16" fill="#fff" fill-opacity=".9">UR10 Base</text>
<polygon points="731,359.2 758,396.5 556,539.6 540,501.9" fill="url(#gFore)"/>
<path d="M729.5,356 Q733,343 749,335.8 Q763,329.5 778.6,330.9 L800,331 L836,372 L833.3,390 Q806,404 776.2,398.5 L764,401.5 Z" fill="url(#gElb)"/>
<path d="M773.7,331 Q752,360 773.7,392 L776.2,398.5 Q806,404 833.3,390 L836,372 L800,331 Z" fill="#484848"/>
<path d="M735,351 Q745,336 766,331.2 L772,331.2 Q752,337 741,352 Z" fill="#e4e4e4" opacity=".9"/>
<path d="M726,359.5 Q744,373 760,404.5" stroke="#d4d4d4" stroke-width="5" fill="none"/>
<path d="M729.5,356 Q748,370 764,401.5" stroke="#2c2c2c" stroke-width="3.2" fill="none"/>
<path d="M776.2,398.5 Q806,406 833.3,390" stroke="#1e1e1e" stroke-width="2.2" fill="none"/>
<ellipse cx="807.5" cy="361.6" rx="29.3" ry="30.6" fill="url(#gCapW)" stroke="#e8f0f8" stroke-width="1" transform="rotate(-10 807.5 361.6)"/>
<circle cx="789.8" cy="346.2" r="1.8" fill="#fff" stroke="#9cb0c4" stroke-width=".8"/>
<circle cx="823.4" cy="339" r="1.8" fill="#fff" stroke="#9cb0c4" stroke-width=".8"/>
<circle cx="832.4" cy="376" r="1.8" fill="#fff" stroke="#9cb0c4" stroke-width=".8"/>
<circle cx="798" cy="384.2" r="1.8" fill="#fff" stroke="#9cb0c4" stroke-width=".8"/>
<g fill="none" stroke="#ffff00" stroke-width="1.7"><path d="M588.2,541 L699.7,559.4 L506.1,823.7 L392,777.6 Z M543.6,669.5 L506.1,823.7 M543.6,669.5 L609,684"/><ellipse cx="0" cy="0" rx="113" ry="59" transform="translate(545,672.5) rotate(-45)"/></g>
<g fill="none" stroke="#ff00ff" stroke-width="1.3" stroke-dasharray="1.6 2.8" transform="translate(0.35,-0.55)"><path d="M588.2,541 L699.7,559.4 L506.1,823.7 L392,777.6 Z M543.6,669.5 L506.1,823.7 M543.6,669.5 L609,684"/><ellipse cx="0" cy="0" rx="113" ry="59" transform="translate(545,672.5) rotate(-45)"/></g>
<ellipse cx="531" cy="514" rx="13" ry="29" fill="#5c5c5c" stroke="#aab8c8" stroke-width="1.5"/>
<rect x="538" y="505" width="48.6" height="56" fill="url(#gWrist)"/>
<path d="M538,500 L586.6,500 L586.6,515 Q562,530 538,515 Z" fill="#e4eef6"/>
<path d="M544,561 L587,561 Q601,570 600,588 Q597,608 578,612 L556,612 L544,600 Z" fill="#c4d6e4"/>
<path d="M544,561 L587,561 Q596,572 595,588 Q592,606 576,610 L556,611 L544,600 Z" fill="url(#gWrist2)"/>
<path d="M540,561.5 L587,560.5" stroke="#c8c8c8" stroke-width="1.5"/>
<polygon points="503.5,572 531,568 559,582.5 553,581" fill="#c6c6c6"/>
<polygon points="503.5,572 553,581 556,671 503.4,656.4" fill="#b2b2b2"/>
<polygon points="553,581 559,582.5 561,672.5 556,671" fill="#d0d0d0"/>
<g fill="#e8e8e8"><circle cx="509.6" cy="584.4" r="1.2"/><circle cx="519.8" cy="585.8" r="1.2"/><circle cx="510.3" cy="602.5" r="1.2"/><circle cx="520.5" cy="605.4" r="1.2"/><circle cx="505.7" cy="577" r="1"/><circle cx="549.5" cy="586" r="1"/></g>
<line x1="519.0" y1="590.0" x2="483.8" y2="596.7" stroke="#0000ff" stroke-width="4.5"/><polygon points="466.2,600.0 483.8,591.4 485.7,601.6" fill="#0000ff"/><line x1="519.0" y1="590.0" x2="519.0" y2="551.6" stroke="#00ff00" stroke-width="4.9"/><polygon points="519.0,534.4 524.6,552.6 513.4,552.6" fill="#00ff00"/>
<line x1="541.6" y1="588.0" x2="497.2" y2="594.9" stroke="#0000ff" stroke-width="4.6"/><polygon points="478.8,597.7 497.3,589.4 499.0,600.0" fill="#0000ff"/><line x1="541.6" y1="588.0" x2="564.7" y2="591.9" stroke="#ff0000" stroke-width="5.7"/><ellipse cx="564.7" cy="591.9" rx="3.1" ry="5.7" transform="rotate(10 564.7 591.9)" fill="#ff0000"/><polygon points="576.8,594.0 563.7,597.5 565.6,586.4" fill="#ff0000"/><line x1="541.6" y1="588.0" x2="541.4" y2="543.2" stroke="#00ff00" stroke-width="5.1"/><polygon points="541.3,525.4 547.2,544.2 535.6,544.3" fill="#00ff00"/>
<line x1="500.0" y1="656.4" x2="463.8" y2="662.5" stroke="#0000ff" stroke-width="4.5"/><polygon points="446.1,665.5 463.9,657.2 465.6,667.5" fill="#0000ff"/><line x1="500.0" y1="656.4" x2="520.1" y2="661.5" stroke="#ff0000" stroke-width="5.5"/><ellipse cx="520.1" cy="661.5" rx="3.0" ry="5.5" transform="rotate(14 520.1 661.5)" fill="#ff0000"/><polygon points="531.6,664.5 518.7,666.8 521.4,656.3" fill="#ff0000"/><line x1="500.0" y1="656.4" x2="499.6" y2="616.3" stroke="#00ff00" stroke-width="4.9"/><polygon points="499.4,599.1 505.2,617.2 494.0,617.4" fill="#00ff00"/>
<line x1="543.6" y1="669.5" x2="506.0" y2="675.7" stroke="#0000ff" stroke-width="4.5"/><polygon points="488.3,678.6 506.1,670.4 507.8,680.6" fill="#0000ff"/><line x1="543.6" y1="669.5" x2="566.3" y2="675.5" stroke="#ff0000" stroke-width="5.5"/><ellipse cx="566.3" cy="675.5" rx="3.0" ry="5.5" transform="rotate(15 566.3 675.5)" fill="#ff0000"/><polygon points="577.8,678.6 564.9,680.8 567.7,670.3" fill="#ff0000"/><line x1="543.6" y1="669.5" x2="542.9" y2="625.4" stroke="#00ff00" stroke-width="4.9"/><polygon points="542.6,608.2 548.5,626.3 537.3,626.5" fill="#00ff00"/>
<line x1="502.8" y1="735.3" x2="474.0" y2="741.1" stroke="#0000ff" stroke-width="3.7"/><polygon points="459.8,743.9 474.2,736.7 475.9,745.0" fill="#0000ff"/><line x1="502.8" y1="735.3" x2="519.2" y2="739.9" stroke="#ff0000" stroke-width="4.5"/><ellipse cx="519.2" cy="739.9" rx="2.5" ry="4.5" transform="rotate(16 519.2 739.9)" fill="#ff0000"/><polygon points="528.6,742.5 518.0,744.2 520.4,735.6" fill="#ff0000"/><line x1="502.8" y1="735.3" x2="502.2" y2="701.5" stroke="#00ff00" stroke-width="4.0"/><polygon points="502.0,687.6 506.9,702.5 497.7,702.6" fill="#00ff00"/>
<line x1="387.4" y1="697.5" x2="358.3" y2="702.5" stroke="#0000ff" stroke-width="3.2"/><polygon points="346.0,704.6 358.7,698.7 359.9,706.0" fill="#0000ff"/><line x1="387.4" y1="697.5" x2="401.5" y2="702.0" stroke="#ff0000" stroke-width="3.9"/><ellipse cx="401.5" cy="702.0" rx="2.1" ry="3.9" transform="rotate(18 401.5 702.0)" fill="#ff0000"/><polygon points="409.6,704.6 400.3,705.7 402.7,698.3" fill="#ff0000"/><line x1="387.4" y1="697.5" x2="386.8" y2="665.6" stroke="#00ff00" stroke-width="3.5"/><polygon points="386.6,653.6 390.8,666.5 382.8,666.7" fill="#00ff00"/>
<line x1="697.9" y1="476.0" x2="674.8" y2="478.1" stroke="#0000ff" stroke-width="3.5"/><polygon points="661.3,479.4 675.4,474.1 676.2,482.0" fill="#0000ff"/><line x1="697.9" y1="476.0" x2="716.6" y2="477.8" stroke="#ff0000" stroke-width="4.2"/><ellipse cx="716.6" cy="477.8" rx="2.3" ry="4.2" transform="rotate(6 716.6 477.8)" fill="#ff0000"/><polygon points="725.7,478.7 716.2,482.0 717.0,473.6" fill="#ff0000"/><line x1="697.9" y1="476.0" x2="697.9" y2="444.5" stroke="#00ff00" stroke-width="3.8"/><polygon points="697.9,431.5 702.2,445.5 693.6,445.5" fill="#00ff00"/>
<text x="703" y="467.8" font-size="16" fill="#fff">ISO p3</text>
<text x="393" y="688.8" font-size="16" fill="#fff">ISO p5</text>
<text x="425.2" y="598.8" font-size="16" fill="#fff">Plaque</text>
<text x="545" y="578.8" font-size="16" fill="#fff" fill-opacity=".85">ISO p1</text>
<text x="548" y="578.8" font-size="16" fill="#fff">CalibTool 1</text>
<text x="507.3" y="648.8" font-size="16" fill="#fff">CalibTool 3</text>
<text x="550.3" y="662.2" font-size="16" fill="#fff">CalibTool 2</text>
<text x="507.3" y="727.8" font-size="16" fill="#fff">ISO p4</text>
<text x="580" y="454.8" font-size="16" fill="#fff">ISO p2</text>
</svg>
<div id="lb"></div>
<div id="tree">
<svg class="ar" style="left:10.6px;top:11.5px" width="10" height="8" viewBox="0 0 10 8"><path d="M1 2 L5 6 L9 2" stroke="#000" stroke-width="1.5" fill="none"/></svg>
<div class="ic" style="left:29.7px;top:5.5px"><svg width="24" height="25" viewBox="0 0 24 25" style="position:absolute;left:0;top:0;overflow:visible"><defs><linearGradient id="stB" x1="0" y1="0" x2="1" y2="1"><stop offset="0" stop-color="#9cd0f8"/><stop offset="1" stop-color="#2868c8"/></linearGradient><linearGradient id="stW" x1="0" y1="0" x2="0" y2="1"><stop offset="0" stop-color="#ffffff"/><stop offset="1" stop-color="#c8ccd4"/></linearGradient></defs><path d="M13.6,3.6 L20.8,1.4 L21,21 L14.8,22.5 Z" fill="url(#stB)"/><path d="M8.2,4.2 L13.8,3.4 L15.2,22.6 L7.4,22.4 Q6,22 6.2,20 L6.6,16 L8,15 Z" fill="url(#stW)"/></svg></div>
<div class="r" style="left:58.2px;top:5.5px;letter-spacing:0.345px">ur10 calibration and results</div>
<svg class="ar" style="left:30.6px;top:36.5px" width="10" height="8" viewBox="0 0 10 8"><path d="M1 2 L5 6 L9 2" stroke="#000" stroke-width="1.5" fill="none"/></svg>
<div class="ic" style="left:49.7px;top:30.5px"><svg width="24" height="25" viewBox="0 0 24 25" style="position:absolute;left:0;top:0;overflow:visible"><path d="M15.1,17 V5" stroke="#2222f0" stroke-width="1.5"/><path d="M15.1,1.8 l-1.9,4.6 h3.8Z" fill="#2222f0"/><path d="M15.1,17 L4,19" stroke="#e04860" stroke-width="1.6"/><path d="M0,19.6 l4.6,-2.6 l0.7,3.8Z" fill="#e04860"/><path d="M15.1,17 L19.4,20.4" stroke="#38b878" stroke-width="1.6"/><path d="M21.8,22.4 l-4.6,-0.9 l2.6,-3.2Z" fill="#48c888"/></svg></div>
<div class="r" style="left:78.2px;top:30.5px;letter-spacing:0.087px">UR10 Base</div>
<svg class="ar" style="left:50.6px;top:61.5px" width="10" height="8" viewBox="0 0 10 8"><path d="M1 2 L5 6 L9 2" stroke="#000" stroke-width="1.5" fill="none"/></svg>
<div class="ic" style="left:69.7px;top:55.5px"><svg width="24" height="25" viewBox="0 0 24 25" style="position:absolute;left:0;top:0;overflow:visible"><path d="M5.6,3.6 L14,1 L19.4,2 L19.6,4.6 L17,6 L14.2,5.4 L13,9.6 L18,12.6 L18.6,17.4 L16,19 L11,18.6 L8.8,15.6 L11.4,12.6 L9.8,9.4 L10.4,5.4 L6.4,6.4 Z" fill="#d06818"/><path d="M13,9.6 L18,12.6 L18.6,17.4 L16,19 L14,16 Z" fill="#a84c0c"/><circle cx="13.4" cy="14.8" r="1.5" fill="#301000"/><circle cx="17.6" cy="3.4" r="1.1" fill="#301000"/><ellipse cx="13.6" cy="20.4" rx="5.6" ry="2.3" fill="#0c0c0c"/><circle cx="5" cy="6.3" r="3.7" fill="#d8d8e8"/><circle cx="5" cy="6.3" r="2.9" fill="#f01010"/></svg></div>
<div class="r" style="left:98.2px;top:55.5px;letter-spacing:0.56px">UR10</div>
<div class="ic" style="left:89.7px;top:80.5px"><svg width="24" height="25" viewBox="0 0 24 25" style="position:absolute;left:0;top:0;overflow:visible"><defs><radialGradient id="gb" cx=".4" cy=".35" r=".7"><stop offset="0" stop-color="#c8ff9c"/><stop offset=".5" stop-color="#38d818"/><stop offset="1" stop-color="#108808"/></radialGradient></defs><path d="M-0.4,3.8 L5.9,1.2 L10.6,5.6 L17.4,8.8 L21.3,17.2 L20.2,17.7 L12.4,10.6 L10.4,11.8 L9.9,13.8 L15.9,22.8 L14.6,22.7 L6.8,17.5 L4.6,15 L1,9 Z" fill="#9ea2cc"/><path d="M-0.4,3.8 L5.9,1.2 L10.6,5.6 L8,7.2 L3,6.6 Z" fill="#c8cce8"/><path d="M12.6,8.4 L17.4,8.8 L21.3,17.2 L20.2,17.7 Z" fill="#b8bce0"/><path d="M8,14.4 L9.9,13.8 L15.9,22.8 L14.6,22.7 Z" fill="#b8bce0"/><circle cx="12.8" cy="8.8" r=".8" fill="#5c608c"/><circle cx="8.2" cy="15" r=".8" fill="#5c608c"/><circle cx="4.9" cy="9.4" r="5" fill="url(#gb)"/></svg></div>
<div class="r" style="left:118.2px;top:80.5px;letter-spacing:0.207px">CalibTool 1</div>
<div class="ic" style="left:89.7px;top:105.5px"><svg width="24" height="25" viewBox="0 0 24 25" style="position:absolute;left:0;top:0;overflow:visible"><path d="M-0.4,3.8 L5.9,1.2 L10.6,5.6 L17.4,8.8 L21.3,17.2 L20.2,17.7 L12.4,10.6 L10.4,11.8 L9.9,13.8 L15.9,22.8 L14.6,22.7 L6.8,17.5 L4.6,15 L1,9 Z" fill="#9ea2cc"/><path d="M-0.4,3.8 L5.9,1.2 L10.6,5.6 L8,7.2 L3,6.6 Z" fill="#c8cce8"/><path d="M12.6,8.4 L17.4,8.8 L21.3,17.2 L20.2,17.7 Z" fill="#b8bce0"/><path d="M8,14.4 L9.9,13.8 L15.9,22.8 L14.6,22.7 Z" fill="#b8bce0"/><circle cx="12.8" cy="8.8" r=".8" fill="#5c608c"/><circle cx="8.2" cy="15" r=".8" fill="#5c608c"/></svg></div>
<div class="r" style="left:118.2px;top:105.5px;letter-spacing:0.271px">CalibTool 2</div>
<div class="ic" style="left:89.7px;top:130.5px"><svg width="24" height="25" viewBox="0 0 24 25" style="position:absolute;left:0;top:0;overflow:visible"><path d="M-0.4,3.8 L5.9,1.2 L10.6,5.6 L17.4,8.8 L21.3,17.2 L20.2,17.7 L12.4,10.6 L10.4,11.8 L9.9,13.8 L15.9,22.8 L14.6,22.7 L6.8,17.5 L4.6,15 L1,9 Z" fill="#9ea2cc"/><path d="M-0.4,3.8 L5.9,1.2 L10.6,5.6 L8,7.2 L3,6.6 Z" fill="#c8cce8"/><path d="M12.6,8.4 L17.4,8.8 L21.3,17.2 L20.2,17.7 Z" fill="#b8bce0"/><path d="M8,14.4 L9.9,13.8 L15.9,22.8 L14.6,22.7 Z" fill="#b8bce0"/><circle cx="12.8" cy="8.8" r=".8" fill="#5c608c"/><circle cx="8.2" cy="15" r=".8" fill="#5c608c"/></svg></div>
<div class="r" style="left:118.2px;top:130.5px;letter-spacing:0.271px">CalibTool 3</div>
<div class="ic" style="left:89.7px;top:155.5px"><svg width="24" height="25" viewBox="0 0 24 25" style="position:absolute;left:0;top:0;overflow:visible"><path d="M-0.4,3.8 L5.9,1.2 L10.6,5.6 L17.4,8.8 L21.3,17.2 L20.2,17.7 L12.4,10.6 L10.4,11.8 L9.9,13.8 L15.9,22.8 L14.6,22.7 L6.8,17.5 L4.6,15 L1,9 Z" fill="#9ea2cc"/><path d="M-0.4,3.8 L5.9,1.2 L10.6,5.6 L8,7.2 L3,6.6 Z" fill="#c8cce8"/><path d="M12.6,8.4 L17.4,8.8 L21.3,17.2 L20.2,17.7 Z" fill="#b8bce0"/><path d="M8,14.4 L9.9,13.8 L15.9,22.8 L14.6,22.7 Z" fill="#b8bce0"/><circle cx="12.8" cy="8.8" r=".8" fill="#5c608c"/><circle cx="8.2" cy="15" r=".8" fill="#5c608c"/></svg></div>
<div class="r" style="left:118.2px;top:155.5px;letter-spacing:0.164px">Plaque</div>
<div class="ic" style="left:89.7px;top:180.5px"><svg width="24" height="25" viewBox="0 0 24 25" style="position:absolute;left:0;top:0;overflow:visible"><path d="M-0.4,3.8 L5.9,1.2 L10.6,5.6 L17.4,8.8 L21.3,17.2 L20.2,17.7 L12.4,10.6 L10.4,11.8 L9.9,13.8 L15.9,22.8 L14.6,22.7 L6.8,17.5 L4.6,15 L1,9 Z" fill="#a0a0a8"/><path d="M-0.4,3.8 L5.9,1.2 L10.6,5.6 L8,7.2 L3,6.6 Z" fill="#c8cce8"/><path d="M12.6,8.4 L17.4,8.8 L21.3,17.2 L20.2,17.7 Z" fill="#b8bce0"/><path d="M8,14.4 L9.9,13.8 L15.9,22.8 L14.6,22.7 Z" fill="#b8bce0"/><circle cx="12.8" cy="8.8" r=".8" fill="#585860"/><circle cx="8.2" cy="15" r=".8" fill="#585860"/></svg></div>
<div class="r" style="left:118.2px;top:180.5px;letter-spacing:0.167px">Plaque collision</div>
<svg class="ar" style="left:50.6px;top:211.5px" width="10" height="8" viewBox="0 0 10 8"><path d="M1 2 L5 6 L9 2" stroke="#000" stroke-width="1.5" fill="none"/></svg>
<div class="ic" style="left:69.7px;top:205.5px"><svg width="24" height="25" viewBox="0 0 24 25" style="position:absolute;left:0;top:0;overflow:visible"><path d="M15.1,17 V5" stroke="#2222f0" stroke-width="1.5"/><path d="M15.1,1.8 l-1.9,4.6 h3.8Z" fill="#2222f0"/><path d="M15.1,17 L4,19" stroke="#e04860" stroke-width="1.6"/><path d="M0,19.6 l4.6,-2.6 l0.7,3.8Z" fill="#e04860"/><path d="M15.1,17 L19.4,20.4" stroke="#38b878" stroke-width="1.6"/><path d="M21.8,22.4 l-4.6,-0.9 l2.6,-3.2Z" fill="#48c888"/></svg></div>
<div class="r" style="left:98.2px;top:205.5px;letter-spacing:-0.12px">Measurements reference</div>
<svg class="ar" style="left:70.6px;top:236.5px" width="10" height="8" viewBox="0 0 10 8"><path d="M1 2 L5 6 L9 2" stroke="#000" stroke-width="1.5" fill="none"/></svg>
<div class="ic" style="left:89.7px;top:230.5px"><svg width="24" height="25" viewBox="0 0 24 25" style="position:absolute;left:0;top:0;overflow:visible"><path d="M15.1,17 V5" stroke="#2222f0" stroke-width="1.5"/><path d="M15.1,1.8 l-1.9,4.6 h3.8Z" fill="#2222f0"/><path d="M15.1,17 L4,19" stroke="#e04860" stroke-width="1.6"/><path d="M0,19.6 l4.6,-2.6 l0.7,3.8Z" fill="#e04860"/><path d="M15.1,17 L19.4,20.4" stroke="#38b878" stroke-width="1.6"/><path d="M21.8,22.4 l-4.6,-0.9 l2.6,-3.2Z" fill="#48c888"/></svg></div>
<div class="r" style="left:118.2px;top:230.5px;letter-spacing:-0.05px">Tracker Reference</div>
<div class="ic" style="left:109.7px;top:255.5px"><svg width="24" height="25" viewBox="0 0 24 25" style="position:absolute;left:0;top:0;overflow:visible"><defs><linearGradient id="cbT" x1="0" y1="0" x2="1" y2="1"><stop offset="0" stop-color="#a8d8ff"/><stop offset=".5" stop-color="#e4f4ff"/><stop offset="1" stop-color="#a0d0fc"/></linearGradient><linearGradient id="cbL" x1="0" y1="0" x2="0" y2="1"><stop offset="0" stop-color="#8cc8fc"/><stop offset="1" stop-color="#2c80e0"/></linearGradient><linearGradient id="cbR" x1="0" y1="0" x2="0" y2="1"><stop offset="0" stop-color="#58a8f4"/><stop offset="1" stop-color="#1460c8"/></linearGradient></defs><path d="M0.6,7.4 L12,1.8 L21.4,4.6 L21,17.4 L12.4,23.2 L1,20 Z" fill="#1c50a8"/><path d="M1.4,7.8 L12,2.6 L20.6,5.2 L12.2,10.6 Z" fill="url(#cbT)"/><path d="M1.4,8.8 L11.8,11.6 L11.8,22.2 L1.8,19.4 Z" fill="url(#cbL)"/><path d="M12.8,11.4 L20.6,6.2 L20.2,17 L12.8,22 Z" fill="url(#cbR)"/></svg></div>
<div class="r" style="left:138.2px;top:255.5px;letter-spacing:-0.15px">LaserTracker</div>
<div class="ic" style="left:69.7px;top:280.5px"><svg width="24" height="25" viewBox="0 0 24 25" style="position:absolute;left:0;top:0;overflow:visible"><defs><linearGradient id="cbT" x1="0" y1="0" x2="1" y2="1"><stop offset="0" stop-color="#a8d8ff"/><stop offset=".5" stop-color="#e4f4ff"/><stop offset="1" stop-color="#a0d0fc"/></linearGradient><linearGradient id="cbL" x1="0" y1="0" x2="0" y2="1"><stop offset="0" stop-color="#8cc8fc"/><stop offset="1" stop-color="#2c80e0"/></linearGradient><linearGradient id="cbR" x1="0" y1="0" x2="0" y2="1"><stop offset="0" stop-color="#58a8f4"/><stop offset="1" stop-color="#1460c8"/></linearGradient></defs><path d="M0.6,7.4 L12,1.8 L21.4,4.6 L21,17.4 L12.4,23.2 L1,20 Z" fill="#1c50a8"/><path d="M1.4,7.8 L12,2.6 L20.6,5.2 L12.2,10.6 Z" fill="url(#cbT)"/><path d="M1.4,8.8 L11.8,11.6 L11.8,22.2 L1.8,19.4 Z" fill="url(#cbL)"/><path d="M12.8,11.4 L20.6,6.2 L20.2,17 L12.8,22 Z" fill="url(#cbR)"/></svg></div>
<div class="r" style="left:98.2px;top:280.5px;letter-spacing:-0.12px">Table (check collision)</div>
<div class="ic" style="left:69.7px;top:305.5px"><svg width="24" height="25" viewBox="0 0 24 25" style="position:absolute;left:0;top:0;overflow:visible"><defs><radialGradient id="tg" cx=".45" cy=".4" r=".7"><stop offset="0" stop-color="#7ce85c"/><stop offset="1" stop-color="#188c10"/></radialGradient></defs><ellipse cx="7.6" cy="15.6" rx="7.6" ry="7.4" fill="#106808"/><ellipse cx="7.6" cy="14.8" rx="7.6" ry="7.2" fill="url(#tg)"/><ellipse cx="7.6" cy="14.8" rx="5" ry="4.7" fill="none" stroke="#e8ffe0" stroke-width="1.5"/><ellipse cx="7.6" cy="14.8" rx="1.8" ry="1.7" fill="none" stroke="#e8ffe0" stroke-width="1.2"/><path d="M8.4,14 L18.8,3.6" stroke="#9c9c9c" stroke-width="1.4"/><ellipse cx="19.4" cy="3" rx="2" ry="1.5" transform="rotate(-45 19.4 3)" fill="#f0f0f0"/></svg></div>
<div class="r" style="left:98.2px;top:305.5px;letter-spacing:0.5px">ISO p1</div>
<div class="ic" style="left:69.7px;top:330.5px"><svg width="24" height="25" viewBox="0 0 24 25" style="position:absolute;left:0;top:0;overflow:visible"><defs><radialGradient id="tg" cx=".45" cy=".4" r=".7"><stop offset="0" stop-color="#7ce85c"/><stop offset="1" stop-color="#188c10"/></radialGradient></defs><ellipse cx="7.6" cy="15.6" rx="7.6" ry="7.4" fill="#106808"/><ellipse cx="7.6" cy="14.8" rx="7.6" ry="7.2" fill="url(#tg)"/><ellipse cx="7.6" cy="14.8" rx="5" ry="4.7" fill="none" stroke="#e8ffe0" stroke-width="1.5"/><ellipse cx="7.6" cy="14.8" rx="1.8" ry="1.7" fill="none" stroke="#e8ffe0" stroke-width="1.2"/><path d="M8.4,14 L18.8,3.6" stroke="#9c9c9c" stroke-width="1.4"/><ellipse cx="19.4" cy="3" rx="2" ry="1.5" transform="rotate(-45 19.4 3)" fill="#f0f0f0"/></svg></div>
<div class="r" style="left:98.2px;top:330.5px;letter-spacing:0.5px">ISO p2</div>
<div class="ic" style="left:69.7px;top:355.5px"><svg width="24" height="25" viewBox="0 0 24 25" style="position:absolute;left:0;top:0;overflow:visible"><defs><radialGradient id="tg" cx=".45" cy=".4" r=".7"><stop offset="0" stop-color="#7ce85c"/><stop offset="1" stop-color="#188c10"/></radialGradient></defs><ellipse cx="7.6" cy="15.6" rx="7.6" ry="7.4" fill="#106808"/><ellipse cx="7.6" cy="14.8" rx="7.6" ry="7.2" fill="url(#tg)"/><ellipse cx="7.6" cy="14.8" rx="5" ry="4.7" fill="none" stroke="#e8ffe0" stroke-width="1.5"/><ellipse cx="7.6" cy="14.8" rx="1.8" ry="1.7" fill="none" stroke="#e8ffe0" stroke-width="1.2"/><path d="M8.4,14 L18.8,3.6" stroke="#9c9c9c" stroke-width="1.4"/><ellipse cx="19.4" cy="3" rx="2" ry="1.5" transform="rotate(-45 19.4 3)" fill="#f0f0f0"/></svg></div>
<div class="r" style="left:98.2px;top:355.5px;letter-spacing:0.5px">ISO p3</div>
<div class="ic" style="left:69.7px;top:380.5px"><svg width="24" height="25" viewBox="0 0 24 25" style="position:absolute;left:0;top:0;overflow:visible"><defs><radialGradient id="tg" cx=".45" cy=".4" r=".7"><stop offset="0" stop-color="#7ce85c"/><stop offset="1" stop-color="#188c10"/></radialGradient></defs><ellipse cx="7.6" cy="15.6" rx="7.6" ry="7.4" fill="#106808"/><ellipse cx="7.6" cy="14.8" rx="7.6" ry="7.2" fill="url(#tg)"/><ellipse cx="7.6" cy="14.8" rx="5" ry="4.7" fill="none" stroke="#e8ffe0" stroke-width="1.5"/><ellipse cx="7.6" cy="14.8" rx="1.8" ry="1.7" fill="none" stroke="#e8ffe0" stroke-width="1.2"/><path d="M8.4,14 L18.8,3.6" stroke="#9c9c9c" stroke-width="1.4"/><ellipse cx="19.4" cy="3" rx="2" ry="1.5" transform="rotate(-45 19.4 3)" fill="#f0f0f0"/></svg></div>
<div class="r" style="left:98.2px;top:380.5px;letter-spacing:0.5px">ISO p4</div>
<div class="ic" style="left:69.7px;top:405.5px"><svg width="24" height="25" viewBox="0 0 24 25" style="position:absolute;left:0;top:0;overflow:visible"><defs><radialGradient id="tg" cx=".45" cy=".4" r=".7"><stop offset="0" stop-color="#7ce85c"/><stop offset="1" stop-color="#188c10"/></radialGradient></defs><ellipse cx="7.6" cy="15.6" rx="7.6" ry="7.4" fill="#106808"/><ellipse cx="7.6" cy="14.8" rx="7.6" ry="7.2" fill="url(#tg)"/><ellipse cx="7.6" cy="14.8" rx="5" ry="4.7" fill="none" stroke="#e8ffe0" stroke-width="1.5"/><ellipse cx="7.6" cy="14.8" rx="1.8" ry="1.7" fill="none" stroke="#e8ffe0" stroke-width="1.2"/><path d="M8.4,14 L18.8,3.6" stroke="#9c9c9c" stroke-width="1.4"/><ellipse cx="19.4" cy="3" rx="2" ry="1.5" transform="rotate(-45 19.4 3)" fill="#f0f0f0"/></svg></div>
<div class="r" style="left:98.2px;top:405.5px;letter-spacing:0.5px">ISO p5</div>
<div class="ic" style="left:49.7px;top:430.5px"><svg width="24" height="25" viewBox="0 0 24 25" style="position:absolute;left:0;top:0;overflow:visible"><path d="M5.6,2.2 Q10.6,1.2 14.6,2.8 Q16,3.8 16,5.6 L16,10 Q15.8,12 13.6,12.2 L8,12.2 Q5.6,12.4 5.4,14.8 L5.4,16.8 L3.2,16.8 Q1,16.2 0.6,12.2 Q0.8,8.4 3.6,8 L10.8,8 L10.8,7.2 L5.4,7.2 L5.4,4.8 Q5.4,2.8 5.6,2.2 Z" fill="#4c8cc4"/><path d="M16.2,8 L18.6,8 Q21,8.8 21.2,12.6 Q21,16.4 18.4,16.8 L11.2,16.8 L11.2,17.6 L16.4,17.6 L16.4,20 Q16.2,22 14,22.6 Q10,23.5 7,22.2 Q5.6,21.2 5.6,19.6 L5.6,15.2 Q5.8,13 8.2,12.8 L13.8,12.8 Q16.2,12.6 16.4,10.2 Z" fill="#f8d848"/><circle cx="8" cy="4.6" r=".9" fill="#fff"/><circle cx="13.8" cy="20.2" r=".9" fill="#fff"/></svg></div>
<div class="r" style="left:78.2px;top:430.5px;letter-spacing:0.151px">Generate targets</div>
<div class="ic" style="left:49.7px;top:455.5px"><svg width="24" height="25" viewBox="0 0 24 25" style="position:absolute;left:0;top:0;overflow:visible"><path d="M10.9,0.6 V23.6 M-0.6,12.1 H22.4" stroke="#000" stroke-width="1.4"/><circle cx="10.9" cy="12.1" r="6.6" fill="#fff" stroke="#000" stroke-width="1.8"/><path d="M10.9,5.5 V9 M10.9,15.2 V18.7 M4.3,12.1 H7.8 M14,12.1 H17.5" stroke="#000" stroke-width="1.4"/></svg></div>
<div class="r" style="left:78.2px;top:455.5px;letter-spacing:0.331px">Robot calibration</div>
<div class="selrow" style="left:46px;top:480.0px;width:260px;height:25px"></div>
<div class="ic" style="left:49.7px;top:480.5px"><svg width="24" height="25" viewBox="0 0 24 25" style="position:absolute;left:0;top:0;overflow:visible"><path d="M10.9,0.6 V23.6 M-0.6,12.1 H22.4" stroke="#14243c" stroke-width="1.3"/><circle cx="10.9" cy="12.1" r="6.4" fill="#c4e0fc" stroke="#14243c" stroke-width="1.6"/><path d="M10.9,5.7 V9 M10.9,15.2 V18.5 M4.5,12.1 H7.8 M14,12.1 H17.3" stroke="#14243c" stroke-width="1.3"/><text x="-0.6" y="21.6" font-size="6.5" font-weight="bold" fill="#189c38" font-family="'Liberation Sans',sans-serif">ISO</text><path d="M12.6,18 L15.6,21.2 L21,15" stroke="#189c38" stroke-width="2.2" fill="none"/></svg></div>
<div class="r" style="left:78.2px;top:480.5px;letter-spacing:0.425px;color:#000">ISO 9283 validation</div>
<svg class="ar" style="left:32px;top:512.5px" width="8" height="10" viewBox="0 0 8 10"><path d="M2 1 L6 5 L2 9" stroke="#5c5c94" stroke-width="1.3" fill="none"/></svg>
<div class="ic" style="left:49.7px;top:505.5px"><svg width="24" height="25" viewBox="0 0 24 25" style="position:absolute;left:0;top:0;overflow:visible"><path d="M2.4,1.6 L14.6,1.6 L19.6,6.4 L19.6,22 L2.4,22 Z" fill="#fcfcfc" stroke="#c8c8c8" stroke-width=".6"/><path d="M2.4,22.2 H19.6" stroke="#888" stroke-width="1"/><path d="M14.6,1.6 L14.6,6.4 L19.6,6.4 Z" fill="#d4d4d4"/><rect x="3.4" y="2.2" width="10" height="2.6" fill="#b090f8"/><path d="M5,8.4 H17.4 M5,10.6 H17.4 M5,12.8 H17.4 M5,15 H17.4 M5,17.2 H17.4 M5,19.4 H17.4" stroke="#a4a4a4" stroke-width="1"/></svg></div>
<div class="r" style="left:78.2px;top:505.5px;letter-spacing:0.497px">ISO9283</div>
<div class="ic" style="left:49.7px;top:530.5px"><svg width="24" height="25" viewBox="0 0 24 25" style="position:absolute;left:0;top:0;overflow:visible"><circle cx="10.7" cy="12.9" r="11.3" fill="#000"/><path d="M0.4,13 H4.6 L6,10.4 L7.6,17.4 L9.6,6 L11.8,19.8 L13.8,9.2 L15.2,14.6 L16.4,13 H21" stroke="#fff" stroke-width="1.5" fill="none" stroke-linejoin="round"/></svg></div>
<div class="r" style="left:78.2px;top:530.5px;letter-spacing:0.24px">Path validation</div>
</div>
</div>
<div id="menu">
<div class="i" style="top:1px;letter-spacing:-0.213px"><svg width="16" height="16" viewBox="0 0 16 16"><path d="M11,11.4 V3.6" stroke="#2222e0" stroke-width="1.2"/><path d="M11,0.8 l-1.5,3.6 h3Z" fill="#2222e0"/><path d="M11,11.4 L3.4,12.8" stroke="#e04860" stroke-width="1.2"/><path d="M0,13.4 l3.6,-2 l0.5,2.8Z" fill="#e04860"/><path d="M11,11.4 L13.8,13.6" stroke="#38b878" stroke-width="1.2"/><path d="M15.8,15 l-3.6,-0.5 l2,-2.5Z" fill="#38b878"/></svg>Calibrate Reference frame (User frame)</div>
<div class="i" style="top:23px;letter-spacing:-0.131px"><svg width="16" height="16" viewBox="0 0 16 16"><g transform="translate(0.4,0.2) scale(0.70)"><path d="M-0.4,3.8 L5.9,1.2 L10.6,5.6 L17.4,8.8 L21.3,17.2 L20.2,17.7 L12.4,10.6 L10.4,11.8 L9.9,13.8 L15.9,22.8 L14.6,22.7 L6.8,17.5 L4.6,15 L1,9 Z" fill="#7478ac"/><path d="M-0.4,3.8 L5.9,1.2 L10.6,5.6 L8,7.2 L3,6.6 Z" fill="#a4a8d0"/><path d="M12.6,8.4 L17.4,8.8 L21.3,17.2 L20.2,17.7 Z" fill="#9094c0"/><path d="M8,14.4 L9.9,13.8 L15.9,22.8 L14.6,22.7 Z" fill="#9094c0"/><circle cx="12.8" cy="8.8" r=".8" fill="#5c608c"/><circle cx="8.2" cy="15" r=".8" fill="#5c608c"/></g></svg>Calibrate Tool frame (TCP)</div>
<div class="s" style="top:49px"></div>
<div class="i" style="top:54px;letter-spacing:-0.342px"><svg width="16" height="16" viewBox="0 0 16 16"><circle cx="8" cy="8" r="8" fill="#000"/><g fill="none" stroke="#fff" stroke-width="1.7" stroke-linecap="round"><path d="M7.2,6 L8.6,4.6 A2,2 0 0 1 11.4,7.4 L10,8.8 A2,2 0 0 1 7.4,8.8"/><path d="M8.8,10 L7.4,11.4 A2,2 0 0 1 4.6,8.6 L6,7.2 A2,2 0 0 1 8.6,7.2"/></g></svg>Synchronize External Axes</div>
<div class="s" style="top:80px"></div>
<div class="i" style="top:85px;letter-spacing:-0.0px"><svg width="16" height="16" viewBox="0 0 16 16"><g fill="#c4c4c4"><rect x="4.0" y="0.2" width="2" height="2.4" transform="rotate(0 5 5)"/><rect x="4.0" y="0.2" width="2" height="2.4" transform="rotate(45 5 5)"/><rect x="4.0" y="0.2" width="2" height="2.4" transform="rotate(90 5 5)"/><rect x="4.0" y="0.2" width="2" height="2.4" transform="rotate(135 5 5)"/><rect x="4.0" y="0.2" width="2" height="2.4" transform="rotate(180 5 5)"/><rect x="4.0" y="0.2" width="2" height="2.4" transform="rotate(225 5 5)"/><rect x="4.0" y="0.2" width="2" height="2.4" transform="rotate(270 5 5)"/><rect x="4.0" y="0.2" width="2" height="2.4" transform="rotate(315 5 5)"/></g><circle cx="5" cy="5" r="3.6" fill="#dedede" stroke="#b4b4b4" stroke-width=".8"/><circle cx="5" cy="5" r="1.2" fill="#f0f0f0" stroke="#b0b0b0" stroke-width=".6"/><g fill="#c4c4c4"><rect x="9.8" y="5.8" width="2" height="2.4" transform="rotate(0 10.8 10.8)"/><rect x="9.8" y="5.8" width="2" height="2.4" transform="rotate(45 10.8 10.8)"/><rect x="9.8" y="5.8" width="2" height="2.4" transform="rotate(90 10.8 10.8)"/><rect x="9.8" y="5.8" width="2" height="2.4" transform="rotate(135 10.8 10.8)"/><rect x="9.8" y="5.8" width="2" height="2.4" transform="rotate(180 10.8 10.8)"/><rect x="9.8" y="5.8" width="2" height="2.4" transform="rotate(225 10.8 10.8)"/><rect x="9.8" y="5.8" width="2" height="2.4" transform="rotate(270 10.8 10.8)"/><rect x="9.8" y="5.8" width="2" height="2.4" transform="rotate(315 10.8 10.8)"/></g><circle cx="10.8" cy="10.8" r="3.8" fill="#dedede" stroke="#b4b4b4" stroke-width=".8"/><circle cx="10.8" cy="10.8" r="1.2" fill="#f0f0f0" stroke="#b0b0b0" stroke-width=".6"/></svg>Add Mechanism or Robot</div>
<div class="s" style="top:111px"></div>
<div class="i" style="top:116px;letter-spacing:0.132px"><svg width="16" height="16" viewBox="0 0 16 16"><defs><linearGradient id="ml" x1="0" y1="0" x2="1" y2="0"><stop offset="0" stop-color="#3c3c3c"/><stop offset=".5" stop-color="#b8b8b8"/><stop offset="1" stop-color="#484848"/></linearGradient></defs><path d="M0.4,0.8 H15.6 L15.4,2 Q11.4,3.2 10.4,7.2 L10.2,15.6 H5.8 L5.6,7.2 Q4.6,3.2 0.6,2 Z" fill="url(#ml)"/><path d="M0.4,1.2 H15.6" stroke="#2c2c2c" stroke-width="1"/><path d="M6.2,9.5 l3.6,1.6 M6.2,12 l3.6,1.6" stroke="#444" stroke-width=".7"/></svg>Robot Milling project<b style="letter-spacing:0.305px">Ctrl+M</b></div>
<div class="i" style="top:138px;letter-spacing:0.088px">Curve follow project (e.g. welding/painting)</div>
<div class="i" style="top:160px;letter-spacing:0.084px">Point follow project (e.g. drilling)</div>
<div class="s" style="top:186px"></div>
<div class="i" style="top:191px;letter-spacing:0.014px">3D print project</div>
<div class="i" style="top:213px;letter-spacing:-0.117px">Open 3D print slicer</div>
<div class="s" style="top:239px"></div>
<div class="i" style="top:244px;letter-spacing:-0.185px"><svg width="16" height="16" viewBox="0 0 16 16"><path d="M8,0.5 V15.5 M0.5,8 H15.5" stroke="#000" stroke-width="1"/><circle cx="8" cy="8" r="4.6" fill="#fff" stroke="#000" stroke-width="1.4"/><path d="M8,3.4 V6 M8,10 V12.6 M3.4,8 H6 M10,8 H12.6" stroke="#000" stroke-width="1"/><path d="M8.6,11.4 L10.8,13.8 L15,8.8" stroke="#20b038" stroke-width="2" fill="none"/></svg>Ballbar accuracy test</div>
<div class="s" style="top:270px"></div>
<div class="i" style="top:275px;letter-spacing:-0.119px"><svg width="16" height="16" viewBox="0 0 16 16"><path d="M8,0.5 V15.5 M0.5,8 H15.5" stroke="#000" stroke-width="1"/><circle cx="8" cy="8" r="4.6" fill="#fff" stroke="#000" stroke-width="1.4"/><path d="M8,3.4 V6 M8,10 V12.6 M3.4,8 H6 M10,8 H12.6" stroke="#000" stroke-width="1"/></svg>Calibrate Robot</div>
<div class="i sel" style="top:297px;letter-spacing:-0.132px"><svg width="16" height="16" viewBox="0 0 16 16"><path d="M8,0.5 V15.5 M0.5,8 H15.5" stroke="#000" stroke-width="1"/><circle cx="8" cy="8" r="4.6" fill="#eaf4ff" stroke="#000" stroke-width="1.4"/><path d="M8,3.4 V6 M8,10 V12.6 M3.4,8 H6 M10,8 H12.6" stroke="#000" stroke-width="1"/><text x="-0.5" y="15.6" font-size="5.4" font-weight="bold" fill="#20a038" font-family="'Liberation Sans',sans-serif">ISO</text><path d="M9,12.4 L11,14.6 L15.2,10" stroke="#20a038" stroke-width="1.8" fill="none"/></svg>Test position accuracy &amp; repeatability (ISO 9283)</div>
<div class="s" style="top:323px"></div>
<div class="i" style="top:328px;letter-spacing:-0.191px"><svg width="16" height="16" viewBox="0 0 16 16"><circle cx="8" cy="8" r="8" fill="#000"/><path d="M0.6,8.2 H3.6 L4.6,6.4 L5.8,11.4 L7.2,3.2 L8.8,13 L10.2,5.6 L11.2,9.4 L12,8.2 H15.4" stroke="#fff" stroke-width="1.1" fill="none" stroke-linejoin="round"/></svg>Test path accuracy, speed &amp; acceleration (ISO 9283)</div>
<div class="s" style="top:354px"></div>
<div class="i" style="top:359px;letter-spacing:-0.274px">Create ISO 9283 cube (targets and path)</div>
<div class="s" style="top:385px"></div>
<div class="i" style="top:390px;letter-spacing:0.025px"><svg width="16" height="16" viewBox="0 0 16 16"><path d="M0.4,0.6 H12.4 L12.2,1.8 Q9.4,2.6 8.6,5 L8.4,7 H4.4 L4.2,5 Q3.4,2.6 0.6,1.8 Z" fill="#5c5c5c"/><path d="M0.4,1 H12.4" stroke="#222" stroke-width="1"/><rect x="4.6" y="5.6" width="11" height="10.2" rx="1" fill="#28c048"/><path d="M7.6,11.2 A2.8,2.8 0 1 1 10.4,13.6" stroke="#e8ffe8" stroke-width="1.4" fill="none"/><path d="M6.2,10 l1.6,2.6 l1.6,-2.4Z" fill="#e8ffe8"/></svg>Update all Milling projects<b style="letter-spacing:-0.057px">Ctrl+U</b></div>
<div class="i" style="top:412px;letter-spacing:-0.153px">Run ballbar test<b style="letter-spacing:-0.098px">Ctrl+B</b></div>
<div class="s" style="top:438px"></div>
<div class="i" style="top:443px;letter-spacing:0.061px">Import Points</div>
<div class="i" style="top:465px;letter-spacing:0.003px">Import Curve</div>
<svg style="position:absolute;left:300px;top:290px" width="80" height="36" viewBox="518 310 80 36"><path d="M583.7,323.2 H555.4 V318 L527.4,328.4 L555.4,338.8 V333.7 H583.7 Z" fill="none" stroke="#ed1c24" stroke-width="4.6" stroke-linejoin="round"/></svg>
</div>
<div id="dlg">
<div id="tb"><svg style="position:absolute;left:8px;top:6px" width="17" height="17" viewBox="0 0 17 17"><circle cx="8.5" cy="8.5" r="8" fill="#9fb4c6"/><circle cx="8.5" cy="8.5" r="6.6" fill="#0e3354"/><path d="M4.6 12 L7.6 6.2 L9.6 4.6 L12 7.2 L11.2 8 L9.6 6.6 L9 9.4 L9.6 12 Z" fill="#fff"/></svg><span id="tt">Robot validation: UR10</span><svg style="position:absolute;left:355px;top:8px" width="110" height="12" viewBox="0 0 110 12"><path d="M0.5 6.5 H10.5" stroke="#555" stroke-width="1" fill="none"/><rect x="46.5" y="1.5" width="9" height="9" stroke="#d4d4d4" stroke-width="1" fill="none"/><path d="M92 1 L102 11 M102 1 L92 11" stroke="#505050" stroke-width="1" fill="none"/></svg></div>
<div class="l" style="left:11px;top:45px;">Robot:</div>
<div class="cb" style="left:126px;top:41px;width:109px;height:22px;line-height:20px"><svg class="ri" width="15" height="17" viewBox="0 0 21 24"><path d="M5.6,3.6 L14,1 L19.4,2 L19.6,4.6 L17,6 L14.2,5.4 L13,9.6 L18,12.6 L18.6,17.4 L16,19 L11,18.6 L8.8,15.6 L11.4,12.6 L9.8,9.4 L10.4,5.4 L6.4,6.4 Z" fill="#d06818"/><path d="M13,9.6 L18,12.6 L18.6,17.4 L16,19 L14,16 Z" fill="#a84c0c"/><circle cx="13.4" cy="14.8" r="1.5" fill="#301000"/><circle cx="17.6" cy="3.4" r="1.1" fill="#301000"/><ellipse cx="13.6" cy="20.6" rx="5.8" ry="2.6" fill="#0c0c0c"/><circle cx="4.6" cy="6.3" r="3.4" fill="#f01010"/></svg><span style="margin-left:22px;letter-spacing:-.4px;position:relative;top:.8px">UR10</span><i></i></div>
<div class="b" style="left:242px;top:42px;width:106px;height:21px;line-height:20.4px">Show signature</div>
<div class="b" style="left:356px;top:42px;width:107px;height:21px;line-height:20.4px">Reset project</div>
<div class="b" style="left:12px;top:71px;width:451px;height:21px;line-height:20.4px">Make mastering program</div>
<div class="l" style="left:10.5px;top:98px;">Robot calibrated on 2015-8-24 16:59:23. Calibrated error: 0.678 mm, using 64 configurations.</div>
<div class="l" style="left:11px;top:117px;font-weight:bold;">Base setup</div>
<div class="b" style="left:12px;top:138px;width:73px;height:21px;line-height:20.4px">Measure</div>
<div class="b" style="left:93px;top:138px;width:73px;height:21px;line-height:20.4px">Show</div>
<div class="cb" style="left:250px;top:137px;width:133px;height:22px;line-height:20px"><i></i></div>
<div class="b" style="left:390px;top:138px;width:73px;height:21px;line-height:20.4px">Update</div>
<pre class="g" style="left:11px;top:167px;width:453px;height:79px;padding-top:2.8000000000000114px">Scheduled measurements: 6. Measurements taken: 6.
Robot frame wrt measurement system:
[-277.059213, 531.165742, 5.856312, 0.000625, 0.000587, 1.570247]
Measured distance between axis 1 and 2: 0.412 mm (angle of 89.959 deg)
Nominal distance: 0 mm (angle of 90 deg)</pre>
<div class="hr" style="top:252px"></div>
<div class="l" style="left:11px;top:260px;font-weight:bold;">Tool setup</div>
<div class="b" style="left:12px;top:281px;width:73px;height:21px;line-height:20.4px">Measure</div>
<div class="b" style="left:93px;top:281px;width:73px;height:21px;line-height:20.4px">Show</div>
<div class="cb" style="left:266px;top:280px;width:117px;height:22px;line-height:20px"><i></i></div>
<div class="b" style="left:390px;top:281px;width:73px;height:21px;line-height:20.4px">Update</div>
<pre class="g" style="left:11px;top:309px;width:453px;height:155px;padding-top:3.8000000000000114px">Scheduled measurements: 9. Measurements taken: 9.
Tool targets: ([X,Y,Z] mm)
id 1: [119.59445,  29.85349,  27.20760]
id 2: [119.58446, -120.15874,  27.06980]
id 3: [-30.48656, -119.75118,  27.29306]
Measured distance between axis 5 and 6: 0.004 mm (angle of 90.014 deg)
Nominal distance: 0 mm (angle of 90 deg)</pre>
<div class="hr" style="top:470px"></div>
<div class="l" style="left:11px;top:478px;font-weight:bold;">Validation</div>
<div class="b" style="left:12px;top:499px;width:73px;height:21px;line-height:20.4px">Measure</div>
<div class="b" style="left:93px;top:499px;width:73px;height:21px;line-height:20.4px">Show</div>
<div class="b" style="left:228px;top:499px;width:73px;height:21px;line-height:20.4px">Update</div>
<div class="b" style="left:309px;top:499px;width:73px;height:21px;line-height:20.4px">Show stats</div>
<div class="b" style="left:390px;top:499px;width:73px;height:21px;line-height:20.4px">Make report</div>
<div class="g" style="left:11px;top:527px;width:453px;height:232px"></div>
<pre class="m" style="left:16px;top:531.8px">Scheduled measurements: 300. Measurements taken: 230.
<b>Repeatability Errors:</b></pre>
<table class="t" style="left:16.399999999999977px;top:558px"><tr><td class="h" style="width:14px"></td><td class="h" style="width:56px">mean (mm)</td><td class="h" style="width:50px">std (mm)</td><td class="h" style="width:50px">max (mm)</td><td class="h" style="width:56px">Six Sigma</td><td class="h" style="width:38px">points</td></tr><tr><td style="width:14px">1:</td><td style="width:56px">0.017</td><td style="width:50px">0.017</td><td style="width:50px">0.119</td><td style="width:56px">0.068</td><td style="width:38px">46</td></tr><tr><td style="width:14px">2:</td><td style="width:56px">0.010</td><td style="width:50px">0.006</td><td style="width:50px">0.028</td><td style="width:56px">0.027</td><td style="width:38px">46</td></tr><tr><td style="width:14px">3:</td><td style="width:56px">0.019</td><td style="width:50px">0.014</td><td style="width:50px">0.088</td><td style="width:56px">0.062</td><td style="width:38px">46</td></tr><tr><td style="width:14px">4:</td><td style="width:56px">0.013</td><td style="width:50px">0.007</td><td style="width:50px">0.041</td><td style="width:56px">0.034</td><td style="width:38px">46</td></tr><tr><td style="width:14px">5:</td><td style="width:56px">0.015</td><td style="width:50px">0.011</td><td style="width:50px">0.054</td><td style="width:56px">0.047</td><td style="width:38px">46</td></tr></table>
<pre class="m" style="left:16px;top:676.8px"><b>Position Errors:</b></pre>
<table class="t" style="left:16.399999999999977px;top:690px"><tr><td class="h" style="width:74px"></td><td class="h" style="width:56px">mean (mm)</td><td class="h" style="width:50px">std (mm)</td><td class="h" style="width:50px">max (mm)</td><td class="h" style="width:56px">Six Sigma</td><td class="h" style="width:38px">points</td></tr><tr><td style="width:74px">Nominal :</td><td style="width:56px">2.677</td><td style="width:50px">0.350</td><td style="width:50px">3.194</td><td style="width:56px">3.726</td><td style="width:38px">230</td></tr><tr><td style="width:74px">Calibrated :</td><td style="width:56px">0.385</td><td style="width:50px">0.182</td><td style="width:50px">0.670</td><td style="width:56px">0.930</td><td style="width:38px">230</td></tr></table>
<div id="sb" style="left:447px;top:528px;width:16px;height:230px"><div class="sa" style="top:0"><svg width="16" height="16" viewBox="0 0 16 16"><path d="M3 10 H10 L6.5 6 Z" fill="#000"/></svg></div><div class="sa" style="top:17px;height:142px"></div><div class="sa" style="top:213px"><svg width="16" height="16" viewBox="0 0 16 16"><path d="M3 6 H10 L6.5 10 Z" fill="#000"/></svg></div></div>
<div id="rr" style="left:4.5px;top:541.8px;width:361.8px;height:213.7px"></div>
</div>
</body></html>
